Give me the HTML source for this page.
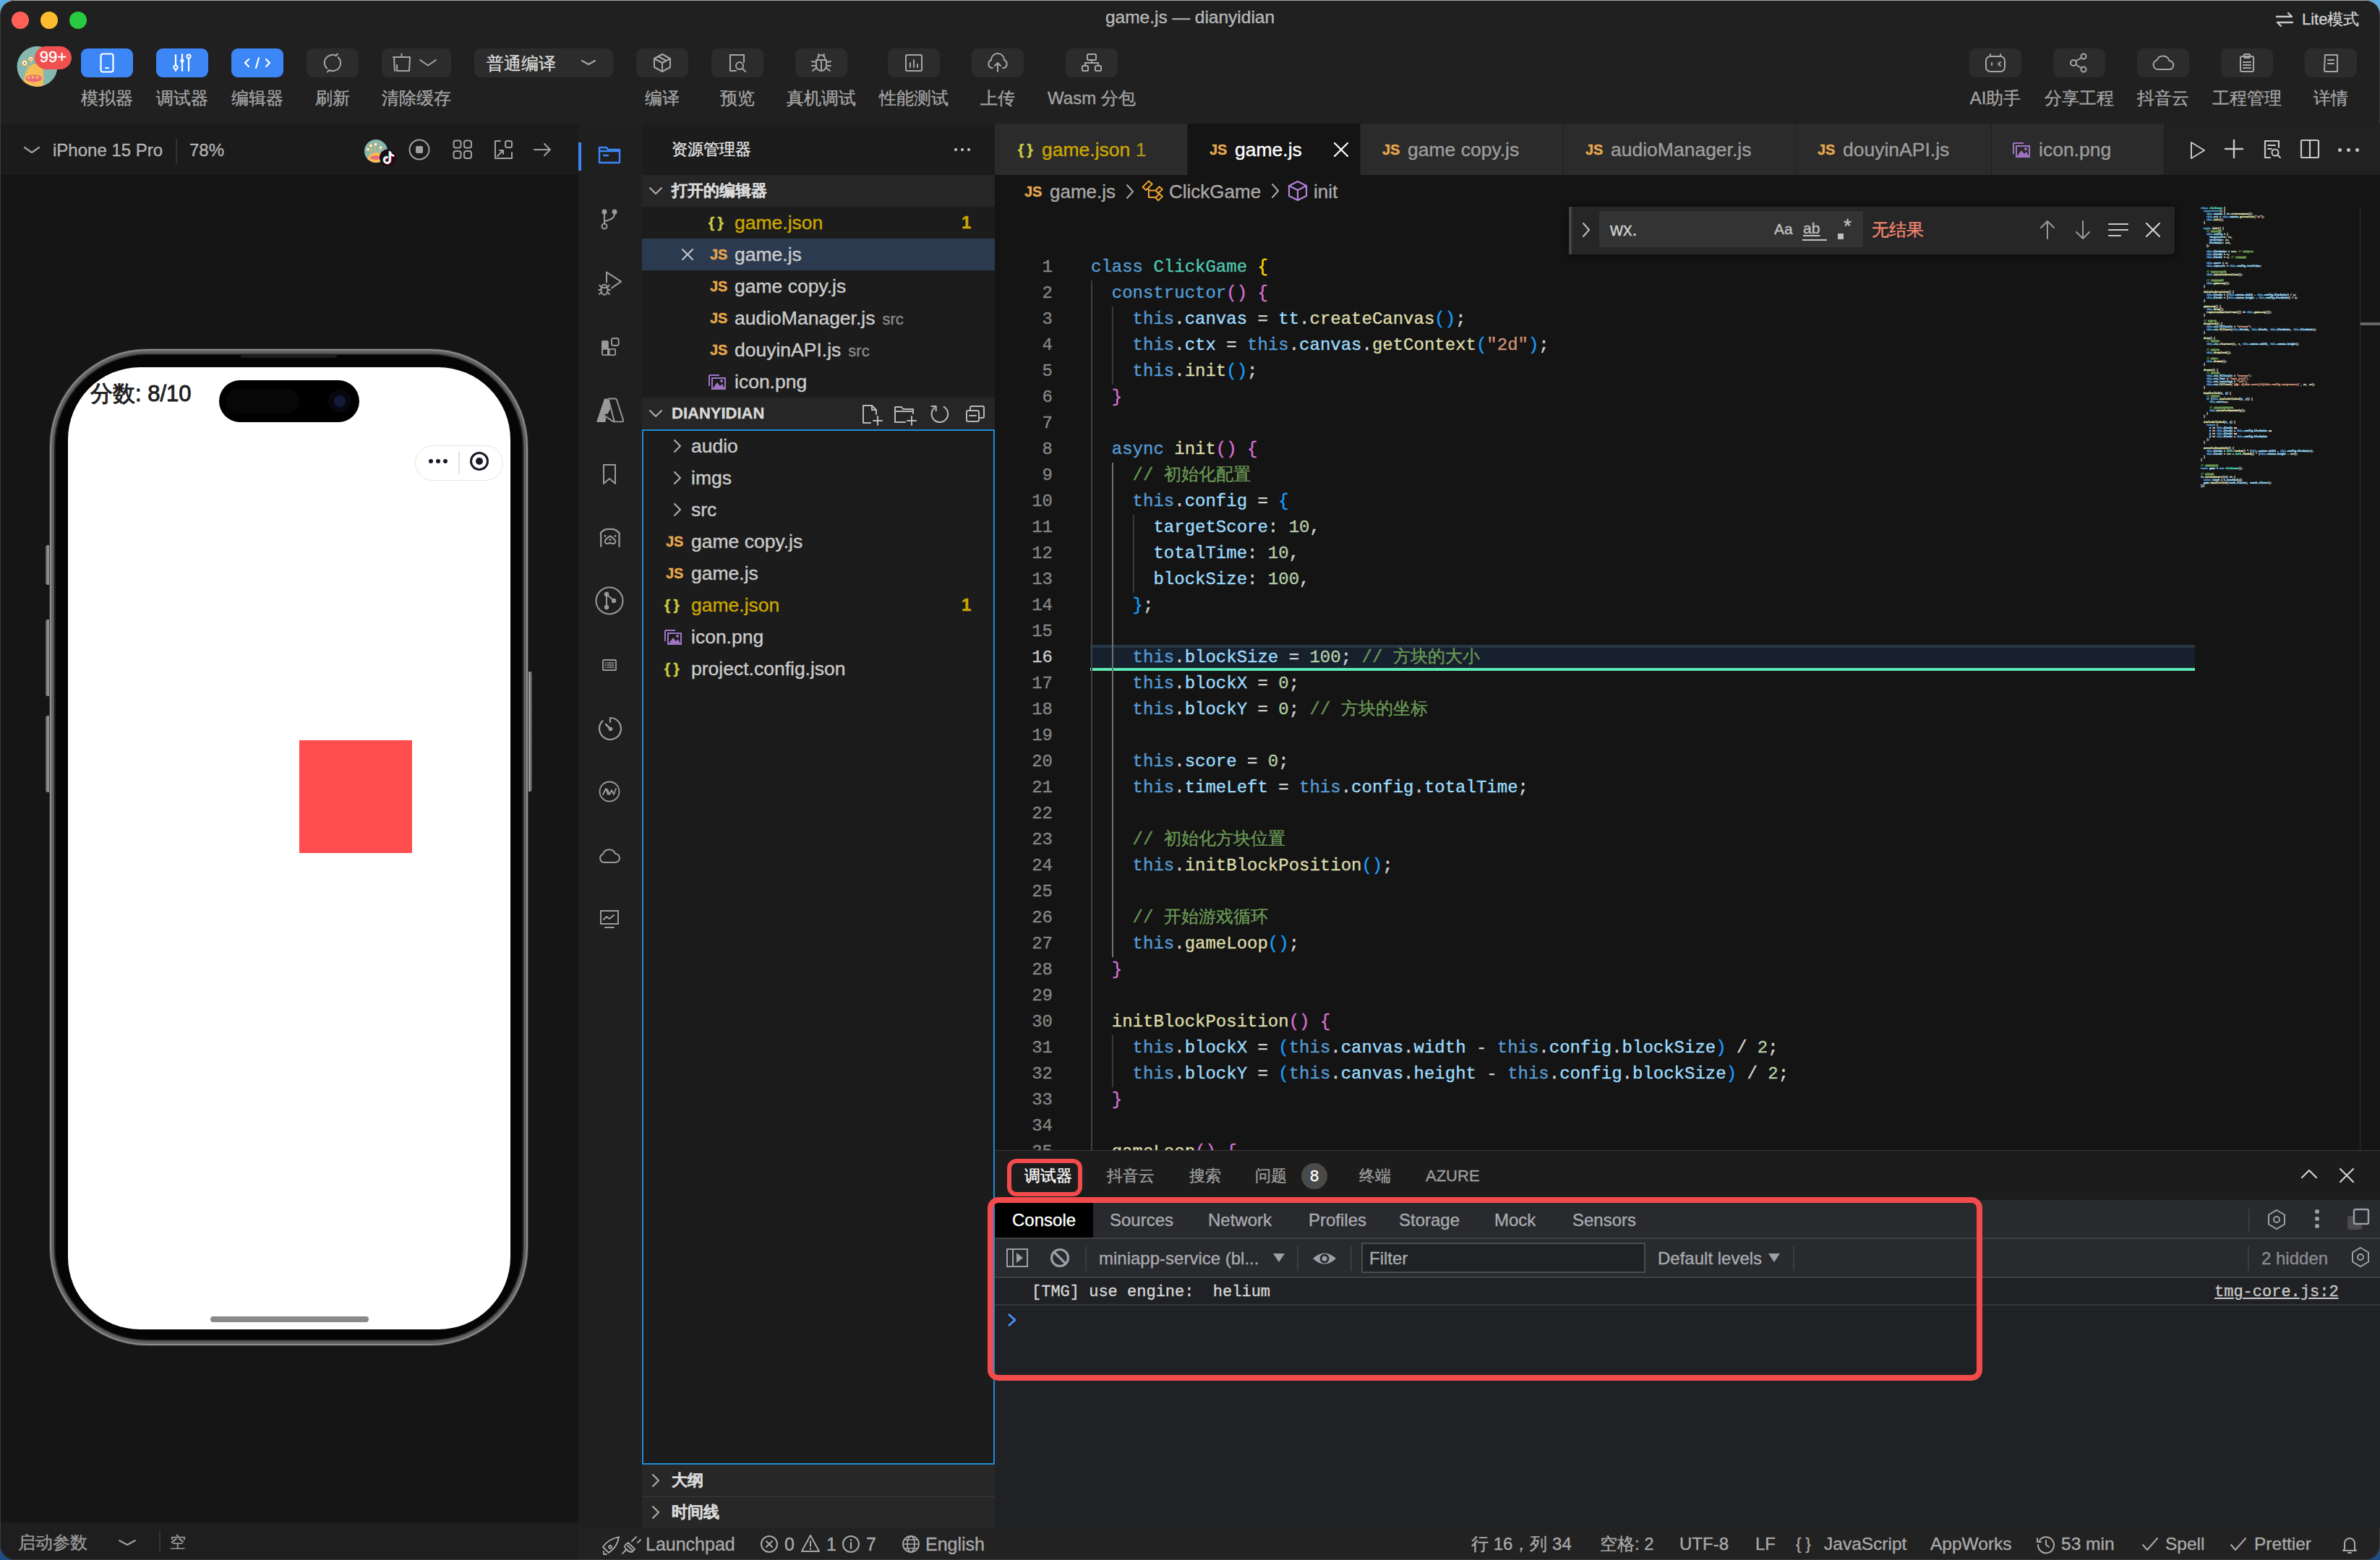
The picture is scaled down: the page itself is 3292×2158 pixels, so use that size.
<!DOCTYPE html><html><head><meta charset="utf-8"><style>
html,body{margin:0;padding:0;}
body{width:3292px;height:2158px;overflow:hidden;background:linear-gradient(180deg,#5ab0e2,#2a6aa8 60%,#1e4c86);position:relative;font-family:"Liberation Sans",sans-serif;}
.a{position:absolute;white-space:nowrap;}
body{-webkit-text-stroke-width:0.35px;}
</style></head><body>

<div class="a" style="left:0px;top:0px;width:3292px;height:2158px;background:#3c3c3c;border-radius:20px;"></div>
<div class="a" style="left:0;top:0;width:3292px;height:40px;border-radius:20px 20px 0 0;border-top:1px solid #a8a8a8;box-sizing:border-box"></div>
<div class="a" style="left:1px;top:1px;width:3290px;height:2156px;background:#202020;border-radius:19px;"></div>
<div class="a" style="left:16px;top:16px;width:24px;height:24px;background:#ff5f57;border-radius:50%;"></div>
<div class="a" style="left:56px;top:16px;width:24px;height:24px;background:#febc2e;border-radius:50%;"></div>
<div class="a" style="left:96px;top:16px;width:24px;height:24px;background:#28c840;border-radius:50%;"></div>
<div class="a" style="left:1346.0px;width:600px;text-align:center;top:6.9px;height:34.3px;line-height:34.3px;font-size:24.5px;color:#b9b9b9;font-weight:normal;font-family:'Liberation Sans', sans-serif;">game.js — dianyidian</div>
<svg class="a" style="left:3146px;top:15px;" width="28" height="24" viewBox="0 0 28 24"><path d="M3 8 H24 M19 3 L24 8 M25 16 H4 M9 21 L4 16" stroke="#c8c8c8" stroke-width="2.4" fill="none" stroke-linecap="round" stroke-linejoin="round"/></svg>
<div class="a" style="left:3184px;top:11.6px;height:30.8px;line-height:30.8px;font-size:22px;color:#cfcfcf;font-weight:normal;font-family:'Liberation Sans', sans-serif;">Lite模式</div>
<svg class="a" style="left:20px;top:60px;" width="84" height="64" viewBox="0 0 84 64">
<defs><clipPath id="avc"><circle cx="31.5" cy="32" r="28"/></clipPath></defs>
<circle cx="31.5" cy="32" r="28" fill="#86b8b2"/><g clip-path="url(#avc)">
<path d="M12 54 Q15 38 21 32 Q27 27.5 33 28.5 Q40 31 40 40 V64 H10 Z" fill="#f6bd55"/>
<path d="M15 30 L21 33 M23 25 L25 30" stroke="#f2b85a" stroke-width="1.5"/>
<ellipse cx="26.7" cy="48.4" rx="11.5" ry="5" fill="#ee6b7a"/>
<path d="M17 46.5 L19.5 50 L22 46 Z M23 45.5 L25.5 49.5 L28 45.5 Z M29 45.5 L31.5 49.5 L34 46 Z" fill="#f6c85a"/>
<circle cx="14" cy="27" r="4" fill="#f5b53f"/><circle cx="14" cy="27" r="2.8" fill="#fff"/><circle cx="14" cy="27.3" r="1" fill="#444"/>
<circle cx="22.5" cy="21.6" r="3.4" fill="#f5b53f"/><circle cx="22.5" cy="21.6" r="2.3" fill="#fff"/><circle cx="22.5" cy="21.8" r="0.9" fill="#444"/></g>
</svg>
<div class="a" style="left:48px;top:64px;width:51px;height:32px;background:#f0504f;border-radius:16px;"></div>
<div class="a" style="left:43.5px;width:60px;text-align:center;top:64.1px;height:30.8px;line-height:30.8px;font-size:22px;color:#fff;font-weight:500;font-family:'Liberation Sans', sans-serif;">99+</div>
<div class="a" style="left:112px;top:67px;width:72px;height:40px;background:#3d86f6;border-radius:9px;"></div>
<div class="a" style="left:216px;top:67px;width:72px;height:40px;background:#3d86f6;border-radius:9px;"></div>
<div class="a" style="left:320px;top:67px;width:72px;height:40px;background:#3d86f6;border-radius:9px;"></div>
<div class="a" style="left:424px;top:67px;width:72px;height:40px;background:#2c2c2c;border-radius:9px;"></div>
<div class="a" style="left:880px;top:67px;width:72px;height:40px;background:#2c2c2c;border-radius:9px;"></div>
<div class="a" style="left:984px;top:67px;width:72px;height:40px;background:#2c2c2c;border-radius:9px;"></div>
<div class="a" style="left:1100px;top:67px;width:72px;height:40px;background:#2c2c2c;border-radius:9px;"></div>
<div class="a" style="left:1228px;top:67px;width:72px;height:40px;background:#2c2c2c;border-radius:9px;"></div>
<div class="a" style="left:1344px;top:67px;width:72px;height:40px;background:#2c2c2c;border-radius:9px;"></div>
<div class="a" style="left:1474px;top:67px;width:72px;height:40px;background:#2c2c2c;border-radius:9px;"></div>
<div class="a" style="left:2724px;top:67px;width:72px;height:40px;background:#2c2c2c;border-radius:9px;"></div>
<div class="a" style="left:2840px;top:67px;width:72px;height:40px;background:#2c2c2c;border-radius:9px;"></div>
<div class="a" style="left:2956px;top:67px;width:72px;height:40px;background:#2c2c2c;border-radius:9px;"></div>
<div class="a" style="left:3072px;top:67px;width:72px;height:40px;background:#2c2c2c;border-radius:9px;"></div>
<div class="a" style="left:3188px;top:67px;width:72px;height:40px;background:#2c2c2c;border-radius:9px;"></div>
<div class="a" style="left:528px;top:67px;width:96px;height:40px;background:#2c2c2c;border-radius:9px;"></div>
<div class="a" style="left:656px;top:67px;width:192px;height:40px;background:#2c2c2c;border-radius:9px;"></div>
<svg class="a" style="left:136px;top:72px;" width="24" height="30" viewBox="0 0 24 30"><rect x="3.5" y="2.5" width="17" height="25" rx="3" stroke="#ffffff" stroke-width="2.2" fill="none" stroke-linecap="round" stroke-linejoin="round"/><path d="M10 22 H14" stroke="#ffffff" stroke-width="2" fill="none" stroke-linecap="round" stroke-linejoin="round"/></svg>
<svg class="a" style="left:236px;top:72px;" width="32" height="30" viewBox="0 0 32 30"><path d="M7 4 V26 M16 3 V26 M25 4 V26" stroke="#ffffff" stroke-width="2.2" fill="none" stroke-linecap="round" stroke-linejoin="round"/><circle cx="7" cy="21" r="2.6" fill="#3d86f6" stroke="#ffffff" stroke-width="2"/><circle cx="16" cy="12" r="2.6" fill="#ffffff"/><circle cx="25" cy="6" r="2.6" fill="#3d86f6" stroke="#ffffff" stroke-width="2"/></svg>
<svg class="a" style="left:336px;top:72px;" width="40" height="30" viewBox="0 0 40 30"><path d="M8 10 L3 15 L8 20 M32 10 L37 15 L32 20 M22 8 L18 22" stroke="#ffffff" stroke-width="2.2" fill="none" stroke-linecap="round" stroke-linejoin="round"/></svg>
<svg class="a" style="left:444px;top:71px;" width="32" height="32" viewBox="0 0 32 32"><path d="M23.8 8.2 A11 11 0 0 1 11.3 26" stroke="#a6a6a6" stroke-width="2" fill="none" stroke-linecap="round" stroke-linejoin="round"/><path d="M8.2 23.8 A11 11 0 0 1 20.7 6" stroke="#a6a6a6" stroke-width="2" fill="none" stroke-linecap="round" stroke-linejoin="round"/><path d="M20.7 6 L23 3.5 M11.3 26 L9 28.5" stroke="#a6a6a6" stroke-width="2" fill="none" stroke-linecap="round" stroke-linejoin="round"/></svg>
<svg class="a" style="left:540px;top:72px;" width="76" height="30" viewBox="0 0 76 30"><path d="M4 7 H27 M15.5 2.5 V7 M5 7 L6 26 M27 7 L26 26 M9 26 H26 M9 18 V26" stroke="#a6a6a6" stroke-width="2" fill="none" stroke-linecap="round" stroke-linejoin="round"/><path d="M41 11 L52 18.5 L63 11" stroke="#a6a6a6" stroke-width="2" fill="none" stroke-linecap="round" stroke-linejoin="round"/></svg>
<div class="a" style="left:673px;top:71.2px;height:33.6px;line-height:33.6px;font-size:24px;color:#d8d8d8;font-weight:500;font-family:'Liberation Sans', sans-serif;">普通编译</div>
<svg class="a" style="left:800px;top:72px;" width="36" height="30" viewBox="0 0 36 30"><path d="M5 12 L14 17 L23 12" stroke="#a6a6a6" stroke-width="2.2" fill="none" stroke-linecap="round" stroke-linejoin="round"/></svg>
<svg class="a" style="left:900px;top:72px;" width="32" height="30" viewBox="0 0 32 30"><path d="M16 3 L27 9 V21 L16 27 L5 21 V9 Z M5 9 L16 15 L27 9 M16 15 V27 M10.5 6 L21.5 12" stroke="#a6a6a6" stroke-width="2" fill="none" stroke-linecap="round" stroke-linejoin="round"/></svg>
<svg class="a" style="left:1004px;top:72px;" width="32" height="30" viewBox="0 0 32 30"><path d="M19 4 H6 V26 H14" stroke="#a6a6a6" stroke-width="2" fill="none" stroke-linecap="round" stroke-linejoin="round"/><path d="M6 4 H25 V14" stroke="#a6a6a6" stroke-width="2" fill="none" stroke-linecap="round" stroke-linejoin="round"/><circle cx="19" cy="19" r="5" stroke="#a6a6a6" stroke-width="2" fill="none" stroke-linecap="round" stroke-linejoin="round"/><path d="M23 23 L27 27" stroke="#a6a6a6" stroke-width="2" fill="none" stroke-linecap="round" stroke-linejoin="round"/></svg>
<svg class="a" style="left:1120px;top:72px;" width="32" height="30" viewBox="0 0 32 30"><path d="M11 9 A5 5 0 0 1 21 9" stroke="#a6a6a6" stroke-width="2" fill="none" stroke-linecap="round" stroke-linejoin="round"/><path d="M9 11 H23 V19 A7 7 0 0 1 9 19 Z M16 13 V26 M12 3 L13 6 M20 3 L19 6 M3 13 L9 14 M29 13 L23 14 M3 19 H9 M29 19 H23 M4 26 L9 22 M28 26 L23 22" stroke="#a6a6a6" stroke-width="2" fill="none" stroke-linecap="round" stroke-linejoin="round"/></svg>
<svg class="a" style="left:1248px;top:72px;" width="32" height="30" viewBox="0 0 32 30"><rect x="5" y="4" width="22" height="22" rx="1.5" stroke="#a6a6a6" stroke-width="2" fill="none" stroke-linecap="round" stroke-linejoin="round"/><path d="M11 21 V15 M16 21 V11 M21 21 V17" stroke="#a6a6a6" stroke-width="2" fill="none" stroke-linecap="round" stroke-linejoin="round"/></svg>
<svg class="a" style="left:1364px;top:72px;" width="32" height="30" viewBox="0 0 32 30"><path d="M9 22 H7 A6 6 0 0 1 7 11 A9 9 0 0 1 25 11 A6 6 0 0 1 25 22 H23" stroke="#a6a6a6" stroke-width="2" fill="none" stroke-linecap="round" stroke-linejoin="round"/><path d="M16 27 V15 M12 19 L16 15 L20 19" stroke="#a6a6a6" stroke-width="2" fill="none" stroke-linecap="round" stroke-linejoin="round"/></svg>
<svg class="a" style="left:1494px;top:72px;" width="32" height="30" viewBox="0 0 32 30"><rect x="10" y="3" width="12" height="8" rx="1.5" stroke="#a6a6a6" stroke-width="2" fill="none" stroke-linecap="round" stroke-linejoin="round"/><rect x="3" y="19" width="8" height="7" rx="1.5" stroke="#a6a6a6" stroke-width="2" fill="none" stroke-linecap="round" stroke-linejoin="round"/><rect x="21" y="19" width="8" height="7" rx="1.5" stroke="#a6a6a6" stroke-width="2" fill="none" stroke-linecap="round" stroke-linejoin="round"/><path d="M16 11 V15 M7 19 V15 H25 V19" stroke="#a6a6a6" stroke-width="2" fill="none" stroke-linecap="round" stroke-linejoin="round"/></svg>
<svg class="a" style="left:2744px;top:72px;" width="32" height="30" viewBox="0 0 32 30"><rect x="3" y="6" width="26" height="21" rx="6" stroke="#a6a6a6" stroke-width="2" fill="none" stroke-linecap="round" stroke-linejoin="round"/><path d="M9 6 V3 M23 6 V3 M11 15 V18 M23 14 L20 16.5 L23 19" stroke="#a6a6a6" stroke-width="2" fill="none" stroke-linecap="round" stroke-linejoin="round"/></svg>
<svg class="a" style="left:2860px;top:72px;" width="32" height="30" viewBox="0 0 32 30"><circle cx="8" cy="15" r="4" stroke="#a6a6a6" stroke-width="2" fill="none" stroke-linecap="round" stroke-linejoin="round"/><circle cx="22" cy="6" r="3.5" stroke="#a6a6a6" stroke-width="2" fill="none" stroke-linecap="round" stroke-linejoin="round"/><circle cx="22" cy="24" r="3.5" stroke="#a6a6a6" stroke-width="2" fill="none" stroke-linecap="round" stroke-linejoin="round"/><path d="M11 12.5 L19 8 M11 17.5 L19 22" stroke="#a6a6a6" stroke-width="2" fill="none" stroke-linecap="round" stroke-linejoin="round"/></svg>
<svg class="a" style="left:2976px;top:72px;" width="32" height="30" viewBox="0 0 32 30"><path d="M9 24 A6.5 6.5 0 0 1 7.5 11.2 A9 9 0 0 1 24.5 12 A6 6 0 0 1 24 24 Z" stroke="#a6a6a6" stroke-width="2" fill="none" stroke-linecap="round" stroke-linejoin="round"/></svg>
<svg class="a" style="left:3092px;top:72px;" width="32" height="30" viewBox="0 0 32 30"><rect x="7" y="6" width="18" height="21" rx="2" stroke="#a6a6a6" stroke-width="2" fill="none" stroke-linecap="round" stroke-linejoin="round"/><rect x="12" y="3" width="8" height="5" rx="1" stroke="#a6a6a6" stroke-width="2" fill="none" stroke-linecap="round" stroke-linejoin="round"/><path d="M11 14 H21 M11 18 H21 M11 22 H21" stroke="#a6a6a6" stroke-width="2" fill="none" stroke-linecap="round" stroke-linejoin="round"/></svg>
<svg class="a" style="left:3208px;top:72px;" width="32" height="30" viewBox="0 0 32 30"><path d="M8 4 H25 V27 H9 Q7 27 7 25 Z" stroke="#a6a6a6" stroke-width="2" fill="none" stroke-linecap="round" stroke-linejoin="round"/><path d="M12 11 H20 M12 16 H20" stroke="#a6a6a6" stroke-width="2" fill="none" stroke-linecap="round" stroke-linejoin="round"/></svg>
<div class="a" style="left:48.0px;width:200px;text-align:center;top:119.2px;height:33.6px;line-height:33.6px;font-size:24px;color:#a3a3a3;font-weight:500;font-family:'Liberation Sans', sans-serif;">模拟器</div>
<div class="a" style="left:152.0px;width:200px;text-align:center;top:119.2px;height:33.6px;line-height:33.6px;font-size:24px;color:#a3a3a3;font-weight:500;font-family:'Liberation Sans', sans-serif;">调试器</div>
<div class="a" style="left:256.0px;width:200px;text-align:center;top:119.2px;height:33.6px;line-height:33.6px;font-size:24px;color:#a3a3a3;font-weight:500;font-family:'Liberation Sans', sans-serif;">编辑器</div>
<div class="a" style="left:360.0px;width:200px;text-align:center;top:119.2px;height:33.6px;line-height:33.6px;font-size:24px;color:#a3a3a3;font-weight:500;font-family:'Liberation Sans', sans-serif;">刷新</div>
<div class="a" style="left:476.0px;width:200px;text-align:center;top:119.2px;height:33.6px;line-height:33.6px;font-size:24px;color:#a3a3a3;font-weight:500;font-family:'Liberation Sans', sans-serif;">清除缓存</div>
<div class="a" style="left:816.0px;width:200px;text-align:center;top:119.2px;height:33.6px;line-height:33.6px;font-size:24px;color:#a3a3a3;font-weight:500;font-family:'Liberation Sans', sans-serif;">编译</div>
<div class="a" style="left:920.0px;width:200px;text-align:center;top:119.2px;height:33.6px;line-height:33.6px;font-size:24px;color:#a3a3a3;font-weight:500;font-family:'Liberation Sans', sans-serif;">预览</div>
<div class="a" style="left:1036.0px;width:200px;text-align:center;top:119.2px;height:33.6px;line-height:33.6px;font-size:24px;color:#a3a3a3;font-weight:500;font-family:'Liberation Sans', sans-serif;">真机调试</div>
<div class="a" style="left:1164.0px;width:200px;text-align:center;top:119.2px;height:33.6px;line-height:33.6px;font-size:24px;color:#a3a3a3;font-weight:500;font-family:'Liberation Sans', sans-serif;">性能测试</div>
<div class="a" style="left:1280.0px;width:200px;text-align:center;top:119.2px;height:33.6px;line-height:33.6px;font-size:24px;color:#a3a3a3;font-weight:500;font-family:'Liberation Sans', sans-serif;">上传</div>
<div class="a" style="left:1410.0px;width:200px;text-align:center;top:119.2px;height:33.6px;line-height:33.6px;font-size:24px;color:#a3a3a3;font-weight:500;font-family:'Liberation Sans', sans-serif;">Wasm 分包</div>
<div class="a" style="left:2660.0px;width:200px;text-align:center;top:119.2px;height:33.6px;line-height:33.6px;font-size:24px;color:#a3a3a3;font-weight:500;font-family:'Liberation Sans', sans-serif;">AI助手</div>
<div class="a" style="left:2776.0px;width:200px;text-align:center;top:119.2px;height:33.6px;line-height:33.6px;font-size:24px;color:#a3a3a3;font-weight:500;font-family:'Liberation Sans', sans-serif;">分享工程</div>
<div class="a" style="left:2892.0px;width:200px;text-align:center;top:119.2px;height:33.6px;line-height:33.6px;font-size:24px;color:#a3a3a3;font-weight:500;font-family:'Liberation Sans', sans-serif;">抖音云</div>
<div class="a" style="left:3008.0px;width:200px;text-align:center;top:119.2px;height:33.6px;line-height:33.6px;font-size:24px;color:#a3a3a3;font-weight:500;font-family:'Liberation Sans', sans-serif;">工程管理</div>
<div class="a" style="left:3124.0px;width:200px;text-align:center;top:119.2px;height:33.6px;line-height:33.6px;font-size:24px;color:#a3a3a3;font-weight:500;font-family:'Liberation Sans', sans-serif;">详情</div>
<div class="a" style="left:1px;top:171px;width:799px;height:71px;background:#1b1b1b;"></div>
<div class="a" style="left:1px;top:242px;width:799px;height:1864px;background:#151515;"></div>
<div class="a" style="left:1px;top:2106px;width:799px;height:51px;background:#1e1e1e;border-radius:0 0 0 19px;"></div>
<svg class="a" style="left:30px;top:196px;" width="30" height="24" viewBox="0 0 30 24"><path d="M4 8 L14 15 L24 8" stroke="#a0a0a0" stroke-width="2.2" fill="none" stroke-linecap="round" stroke-linejoin="round"/></svg>
<div class="a" style="left:73px;top:191.2px;height:33.6px;line-height:33.6px;font-size:24px;color:#b3b3b3;font-weight:normal;font-family:'Liberation Sans', sans-serif;">iPhone 15 Pro</div>
<div class="a" style="left:243px;top:192px;width:2px;height:34px;background:#333;"></div>
<div class="a" style="left:262px;top:191.2px;height:33.6px;line-height:33.6px;font-size:24px;color:#b3b3b3;font-weight:normal;font-family:'Liberation Sans', sans-serif;">78%</div>
<svg class="a" style="left:500px;top:190px;" width="52" height="44" viewBox="0 0 52 44"><defs><clipPath id="av2"><circle cx="20" cy="19" r="16"/></clipPath></defs>
<circle cx="20" cy="19" r="16" fill="#86b8b2"/><g clip-path="url(#av2)">
<path d="M7 36 Q8 21.5 20 20.5 Q31 21.5 32 36 Z" fill="#f6bd55"/>
<path d="M9 17 L12 21 M13 12 L15 20 M19 10.5 L19 20 M26 15 L24 21" stroke="#f2b85a" stroke-width="1.2"/>
<ellipse cx="19.5" cy="28" rx="7.5" ry="3" fill="#ee6b7a"/>
<circle cx="9" cy="16.5" r="2.3" fill="#f5b53f"/><circle cx="9" cy="16.5" r="1.5" fill="#fff"/>
<circle cx="13" cy="11.5" r="2.3" fill="#f5b53f"/><circle cx="13" cy="11.5" r="1.5" fill="#fff"/>
<circle cx="19.5" cy="9.5" r="2.3" fill="#f5b53f"/><circle cx="19.5" cy="9.5" r="1.5" fill="#fff"/>
<circle cx="26.5" cy="14" r="2.3" fill="#f5b53f"/><circle cx="26.5" cy="14" r="1.5" fill="#fff"/></g>
<circle cx="36.5" cy="28" r="11.5" fill="#1c0b16"/>
<path d="M39.5 20.5 Q40.5 24.5 44 25.2 M39.5 20.5 V31.5 A4 4 0 1 1 35.5 27.5" stroke="#25f4ee" stroke-width="2.6" fill="none" stroke-linecap="round" transform="translate(-0.8,-0.6)"/>
<path d="M39.5 20.5 Q40.5 24.5 44 25.2 M39.5 20.5 V31.5 A4 4 0 1 1 35.5 27.5" stroke="#fe2c55" stroke-width="2.6" fill="none" stroke-linecap="round" transform="translate(0.8,0.6)"/>
<path d="M39.5 20.5 Q40.5 24.5 44 25.2 M39.5 20.5 V31.5 A4 4 0 1 1 35.5 27.5" stroke="#fff" stroke-width="2.4" fill="none" stroke-linecap="round"/></svg>
<svg class="a" style="left:564px;top:191px;" width="32" height="32" viewBox="0 0 32 32"><circle cx="16" cy="16" r="13.5" stroke="#a0a0a0" stroke-width="2" fill="none"/><rect x="11" y="11" width="10" height="10" rx="2" fill="#a0a0a0"/></svg>
<svg class="a" style="left:624px;top:191px;" width="32" height="32" viewBox="0 0 32 32"><rect x="3.5" y="3.5" width="10" height="10" rx="3" stroke="#a0a0a0" stroke-width="2" fill="none"/><rect x="18" y="3.5" width="10" height="10" rx="3" stroke="#a0a0a0" stroke-width="2" fill="none"/><rect x="3.5" y="18" width="10" height="10" rx="3" stroke="#a0a0a0" stroke-width="2" fill="none"/><rect x="18" y="18" width="10" height="10" rx="3" stroke="#a0a0a0" stroke-width="2" fill="none"/></svg>
<svg class="a" style="left:680px;top:191px;" width="32" height="32" viewBox="0 0 32 32"><path d="M12 4 H5 V28 H28 V20" stroke="#a0a0a0" stroke-width="2" fill="none" stroke-linecap="round" stroke-linejoin="round"/><rect x="19" y="4" width="9" height="9" rx="2.5" stroke="#a0a0a0" stroke-width="2" fill="none"/><path d="M8 25 L16 17 M11 17 H16 V22" stroke="#a0a0a0" stroke-width="2" fill="none" stroke-linecap="round" stroke-linejoin="round"/></svg>
<svg class="a" style="left:736px;top:191px;" width="32" height="32" viewBox="0 0 32 32"><path d="M3 16 H25 M17 8 L25 16 L17 24" stroke="#a0a0a0" stroke-width="2" fill="none" stroke-linecap="round" stroke-linejoin="round"/></svg>
<div class="a" style="left:63px;top:754px;width:7px;height:55px;background:linear-gradient(90deg,#555,#9a9a9a 50%,#444);border-radius:3px;"></div>
<div class="a" style="left:63px;top:857px;width:7px;height:106px;background:linear-gradient(90deg,#555,#9a9a9a 50%,#444);border-radius:3px;"></div>
<div class="a" style="left:63px;top:990px;width:7px;height:106px;background:linear-gradient(90deg,#555,#9a9a9a 50%,#444);border-radius:3px;"></div>
<div class="a" style="left:729px;top:929px;width:7px;height:166px;background:linear-gradient(90deg,#555,#9a9a9a 50%,#444);border-radius:3px;"></div>
<div class="a" style="left:68px;top:482px;width:663px;height:1380px;background:#3a3a3a;border-radius:136px;"></div>
<div class="a" style="left:69px;top:483px;width:661px;height:1378px;background:#8c8c8c;border-radius:135px;"></div>
<div class="a" style="left:71px;top:485px;width:657px;height:1374px;background:#626262;border-radius:133px;"></div>
<div class="a" style="left:74px;top:488px;width:651px;height:1368px;background:#4a4a4a;border-radius:130px;"></div>
<div class="a" style="left:75px;top:490px;width:649px;height:1364px;background:#1c1c1c;border-radius:129px;"></div>
<div class="a" style="left:77px;top:491px;width:645px;height:1362px;background:#050505;border-radius:127px;"></div>
<div class="a" style="left:333px;top:491px;width:133px;height:4px;background:#1c1c1c;border-radius:0 0 3px 3px;"></div>
<div class="a" style="left:94px;top:508px;width:612px;height:1331px;background:#ffffff;border-radius:100px;"></div>
<div class="a" style="left:303px;top:526px;width:194px;height:58px;background:#000;border-radius:29px;"></div>
<div class="a" style="left:313px;top:538px;width:101px;height:33px;background:#070707;border-radius:17px;"></div>
<div class="a" style="left:454px;top:539px;width:32px;height:32px;background:#07070f;border-radius:50%;"></div>
<div class="a" style="left:462px;top:547px;width:16px;height:16px;background:#141a3a;border-radius:50%;"></div>
<div class="a" style="left:125px;top:523.3px;height:43.4px;line-height:43.4px;font-size:31px;color:#1e1e1e;font-weight:500;font-family:'Liberation Sans', sans-serif;-webkit-text-stroke-width:0.9px;">分数: 8/10</div>
<div class="a" style="left:574px;top:616px;width:122px;height:49px;background:rgba(255,255,255,0.9);border-radius:25px;border:1px solid #e6e6e6;box-sizing:border-box;"></div>
<div class="a" style="left:593px;top:635px;width:6px;height:6px;background:#1a1a2a;border-radius:50%;"></div>
<div class="a" style="left:603px;top:635px;width:6px;height:6px;background:#1a1a2a;border-radius:50%;"></div>
<div class="a" style="left:613px;top:635px;width:6px;height:6px;background:#1a1a2a;border-radius:50%;"></div>
<div class="a" style="left:634px;top:625px;width:1.5px;height:30px;background:#e0e0e0;"></div>
<svg class="a" style="left:648px;top:623px;" width="30" height="30" viewBox="0 0 30 30"><circle cx="15" cy="15" r="11.5" stroke="#1a1a2a" stroke-width="3" fill="none"/><circle cx="15" cy="15" r="5" fill="#1a1a2a"/></svg>
<div class="a" style="left:414px;top:1024px;width:156px;height:156px;background:#ff4d50;"></div>
<div class="a" style="left:291px;top:1821px;width:219px;height:8px;background:#8a8a8a;border-radius:4px;"></div>
<div class="a" style="left:25px;top:2117.6px;height:32.9px;line-height:32.9px;font-size:23.5px;color:#9a9a9a;font-weight:500;font-family:'Liberation Sans', sans-serif;">启动参数</div>
<svg class="a" style="left:160px;top:2124px;" width="32" height="22" viewBox="0 0 32 22"><path d="M5 7 L16 13 L27 7" stroke="#a0a0a0" stroke-width="2" fill="none" stroke-linecap="round" stroke-linejoin="round"/></svg>
<div class="a" style="left:220px;top:2117px;width:2px;height:30px;background:#333;"></div>
<div class="a" style="left:235px;top:2118.6px;height:30.8px;line-height:30.8px;font-size:22px;color:#9a9a9a;font-weight:500;font-family:'Liberation Sans', sans-serif;">空</div>
<div class="a" style="left:800px;top:171px;width:88px;height:1943px;background:#1f1f1f;"></div>
<div class="a" style="left:800px;top:197px;width:4px;height:39px;background:#3d86f6;"></div>
<svg class="a" style="left:825px;top:196px;" width="36" height="36" viewBox="0 0 36 36"><path d="M4 8 H14 L16 11 H32 V29 H4 Z" stroke="#3d86f6" stroke-width="2.4" fill="none" stroke-linecap="round" stroke-linejoin="round"/><path d="M4 13 H32 M10 19 H16" stroke="#3d86f6" stroke-width="2.4" fill="none" stroke-linecap="round" stroke-linejoin="round"/></svg>
<svg class="a" style="left:825px;top:285px;" width="36" height="36" viewBox="0 0 36 36"><circle cx="11" cy="8" r="3.5" fill="#9a9a9a"/><circle cx="25" cy="8" r="3.5" fill="#9a9a9a"/><circle cx="11" cy="28" r="3.5" stroke="#9a9a9a" stroke-width="2" fill="none"/><path d="M11 11 V24 M25 11 Q25 18 12 21" stroke="#9a9a9a" stroke-width="2" fill="none" stroke-linecap="round" stroke-linejoin="round"/></svg>
<svg class="a" style="left:823px;top:371px;" width="40" height="40" viewBox="0 0 40 40"><path d="M16 5.6 V19.4 M16 5.6 L36 18.4 L23.2 27.4" stroke="#9a9a9a" stroke-width="2" fill="none" stroke-linecap="round" stroke-linejoin="round"/><ellipse cx="13" cy="29.6" rx="4.6" ry="7.2" stroke="#9a9a9a" stroke-width="2" fill="none"/><path d="M8.6 27 H17.4 M6 23.5 L9 26 M20 23.5 L17 26 M5 30 H8.5 M21 30 H17.5 M6 36 L9 33 M20 36 L17 33" stroke="#9a9a9a" stroke-width="1.9" fill="none" stroke-linecap="round" stroke-linejoin="round"/></svg>
<svg class="a" style="left:825px;top:462px;" width="36" height="36" viewBox="0 0 36 36"><path d="M9 9 H14.8 Q16.8 9 16.8 11 V20 H25 Q27 20 27 22 V28 Q27 30 25 30 H9 Q7 30 7 28 V11 Q7 9 9 9 Z" fill="#9a9a9a"/><path d="M9 21.8 H15 V28.2 H9 Z M18.6 21.8 H25.2 V28.2 H18.6 Z" fill="#1f1f1f"/><rect x="21" y="6" width="9.7" height="10" rx="2.5" stroke="#9a9a9a" stroke-width="1.9" fill="none"/></svg>
<svg class="a" style="left:823px;top:549px;" width="40" height="38" viewBox="0 0 40 38"><path d="M13 2.5 H18.5 L21 17 L17.5 23.5 L11 24.5 L15.5 29.5 L14.3 35 H3.5 Q2 35 2.5 33.5 Z" fill="#9a9a9a"/><path d="M18.5 2.5 H28 Q29.5 2.5 30 4 L39 32 Q39.5 34.4 37 34.4 H25.5 L11.2 24.5 M18.8 3.8 L26.9 34.4" stroke="#9a9a9a" stroke-width="1.9" fill="none" stroke-linejoin="round"/></svg>
<svg class="a" style="left:825px;top:638px;" width="36" height="36" viewBox="0 0 36 36"><path d="M10 5 H26 V31 L18 24 L10 31 Z" stroke="#9a9a9a" stroke-width="2" fill="none" stroke-linecap="round" stroke-linejoin="round"/></svg>
<svg class="a" style="left:825px;top:722px;" width="38" height="40" viewBox="0 0 38 40"><path d="M6.2 34 V18 Q5 15 7 14 Q12 9 18.8 10 Q25.6 9 30 14 Q32.5 15 31.5 18 V34" stroke="#9a9a9a" stroke-width="2.2" fill="none" stroke-linecap="round" stroke-linejoin="round"/><circle cx="12" cy="19.5" r="1.4" fill="#9a9a9a"/><circle cx="26" cy="19.5" r="1.4" fill="#9a9a9a"/><path d="M19 19.5 Q16 21 12.5 25 Q10.5 29 14 30 Q17 30.5 19 28.5 Q21 30.5 24 30 Q27.5 29 25.5 25 Q22 21 19 19.5 Z" stroke="#9a9a9a" stroke-width="2" fill="none" stroke-linecap="round" stroke-linejoin="round"/><ellipse cx="19" cy="24.5" rx="2.3" ry="1.1" fill="#9a9a9a"/></svg>
<svg class="a" style="left:823px;top:811px;" width="40" height="40" viewBox="0 0 40 40"><circle cx="20" cy="20" r="18.5" stroke="#9a9a9a" stroke-width="2" fill="none"/><circle cx="16" cy="11" r="3.2" fill="#9a9a9a"/><circle cx="16" cy="29" r="3.2" fill="#9a9a9a"/><circle cx="26" cy="20" r="3.2" fill="#9a9a9a"/><path d="M16 11 V29 M16 11 L26 20" stroke="#9a9a9a" stroke-width="2" fill="none" stroke-linecap="round" stroke-linejoin="round"/></svg>
<svg class="a" style="left:825px;top:902px;" width="36" height="36" viewBox="0 0 36 36"><rect x="9" y="11" width="18" height="14" rx="1" stroke="#9a9a9a" stroke-width="1.8" fill="none"/><path d="M12 15 H13 M15 15 H24 M12 18 H13 M15 18 H24 M12 21 H13 M15 21 H24" stroke="#9a9a9a" stroke-width="1.5" fill="none" stroke-linecap="round" stroke-linejoin="round"/></svg>
<svg class="a" style="left:826px;top:990px;" width="36" height="36" viewBox="0 0 36 36"><path d="M18 3 A15 15 0 1 1 7.4 7.4" stroke="#9a9a9a" stroke-width="2.2" fill="none" stroke-linecap="round" stroke-linejoin="round"/><path d="M12 12 L18 18" stroke="#9a9a9a" stroke-width="2.6" fill="none" stroke-linecap="round" stroke-linejoin="round"/><circle cx="18.5" cy="18.5" r="2.8" fill="#9a9a9a"/><path d="M18 3 V9" stroke="#9a9a9a" stroke-width="2.2" fill="none" stroke-linecap="round" stroke-linejoin="round"/></svg>
<svg class="a" style="left:825px;top:1077px;" width="36" height="36" viewBox="0 0 36 36"><circle cx="18" cy="18" r="13.5" stroke="#9a9a9a" stroke-width="1.8" fill="none"/><path d="M9 22 L13 14 L16 22 M15 15 L18 22 L21 16 L24 22 L27 14" stroke="#9a9a9a" stroke-width="1.8" fill="none" stroke-linecap="round" stroke-linejoin="round"/></svg>
<svg class="a" style="left:825px;top:1166px;" width="36" height="36" viewBox="0 0 36 36"><path d="M10 27 A6 6 0 0 1 9 15.5 A9 9 0 0 1 26 15 A6 6 0 0 1 26 27 Z" stroke="#9a9a9a" stroke-width="2" fill="none" stroke-linecap="round" stroke-linejoin="round"/></svg>
<svg class="a" style="left:825px;top:1253px;" width="36" height="36" viewBox="0 0 36 36"><rect x="6" y="7" width="24" height="18" stroke="#9a9a9a" stroke-width="2" fill="none"/><path d="M10 19 L14 15 L18 18 L24 13 M12 30 H24" stroke="#9a9a9a" stroke-width="2" fill="none" stroke-linecap="round" stroke-linejoin="round"/></svg>
<div class="a" style="left:888px;top:171px;width:488px;height:1943px;background:#1c1c1c;"></div>
<div class="a" style="left:929px;top:191.6px;height:30.8px;line-height:30.8px;font-size:22px;color:#e6e6e6;font-weight:500;font-family:'Liberation Sans', sans-serif;">资源管理器</div>
<div class="a" style="left:1320px;top:205px;width:4px;height:4px;background:#cfcfcf;border-radius:50%;"></div>
<div class="a" style="left:1329px;top:205px;width:4px;height:4px;background:#cfcfcf;border-radius:50%;"></div>
<div class="a" style="left:1338px;top:205px;width:4px;height:4px;background:#cfcfcf;border-radius:50%;"></div>
<div class="a" style="left:888px;top:242px;width:488px;height:44px;background:#262626;"></div>
<svg class="a" style="left:896px;top:254px;" width="22" height="20" viewBox="0 0 22 20"><path d="M3 6 L11 14 L19 6" stroke="#b0b0b0" stroke-width="2" fill="none" stroke-linecap="round" stroke-linejoin="round"/></svg>
<div class="a" style="left:929px;top:248.6px;height:30.8px;line-height:30.8px;font-size:22px;color:#d8d8d8;font-weight:bold;font-family:'Liberation Sans', sans-serif;">打开的编辑器</div>
<div class="a" style="left:980px;top:294px;height:28px;line-height:28px;font-size:21px;font-weight:bold;color:#cbcb41;font-family:'Liberation Sans', sans-serif;letter-spacing:0px">{&thinsp;}</div>
<div class="a" style="left:1016px;top:290px;height:36px;line-height:36px;font-size:26.5px;color:#cca700;font-family:'Liberation Sans', sans-serif">game.json</div>
<div class="a" style="left:1330px;top:291.2px;height:33.6px;line-height:33.6px;font-size:24px;color:#cca700;font-weight:bold;font-family:'Liberation Sans', sans-serif;">1</div>
<div class="a" style="left:888px;top:330px;width:488px;height:44px;background:#2c3a50;"></div>
<svg class="a" style="left:940px;top:341px;" width="22" height="22" viewBox="0 0 22 22"><path d="M4 4 L18 18 M18 4 L4 18" stroke="#c8c8c8" stroke-width="2" fill="none" stroke-linecap="round" stroke-linejoin="round"/></svg>
<div class="a" style="left:982px;top:340px;height:24px;line-height:24px;font-size:20px;font-weight:bold;color:#e8a84c;font-family:'Liberation Sans', sans-serif;letter-spacing:0px">JS</div>
<div class="a" style="left:1016px;top:334px;height:36px;line-height:36px;font-size:26.5px;color:#cccccc;font-family:'Liberation Sans', sans-serif">game.js</div>
<div class="a" style="left:982px;top:384px;height:24px;line-height:24px;font-size:20px;font-weight:bold;color:#e8a84c;font-family:'Liberation Sans', sans-serif;letter-spacing:0px">JS</div>
<div class="a" style="left:1016px;top:378px;height:36px;line-height:36px;font-size:26.5px;color:#cccccc;font-family:'Liberation Sans', sans-serif">game copy.js</div>
<div class="a" style="left:982px;top:428px;height:24px;line-height:24px;font-size:20px;font-weight:bold;color:#e8a84c;font-family:'Liberation Sans', sans-serif;letter-spacing:0px">JS</div>
<div class="a" style="left:1016px;top:422px;height:36px;line-height:36px;font-size:26.5px;color:#cccccc;font-family:'Liberation Sans', sans-serif">audioManager.js<span style="font-size:22px;color:#8c8c8c;margin-left:10px">src</span></div>
<div class="a" style="left:982px;top:472px;height:24px;line-height:24px;font-size:20px;font-weight:bold;color:#e8a84c;font-family:'Liberation Sans', sans-serif;letter-spacing:0px">JS</div>
<div class="a" style="left:1016px;top:466px;height:36px;line-height:36px;font-size:26.5px;color:#cccccc;font-family:'Liberation Sans', sans-serif">douyinAPI.js<span style="font-size:22px;color:#8c8c8c;margin-left:10px">src</span></div>
<svg class="a" style="left:979px;top:516px;" width="26" height="24" viewBox="0 0 26 24"><path d="M2 3 H16" stroke="#a074c4" stroke-width="2"/><path d="M2 3 V18" stroke="#a074c4" stroke-width="2"/><rect x="6" y="7" width="18" height="15" fill="none" stroke="#a074c4" stroke-width="2"/><path d="M7 21 L13 13 L17 18 L20 15 L23 21 Z" fill="#a074c4"/><circle cx="19" cy="11" r="2" fill="#a074c4"/></svg>
<div class="a" style="left:1016px;top:510px;height:36px;line-height:36px;font-size:26.5px;color:#cccccc;font-family:'Liberation Sans', sans-serif">icon.png</div>
<div class="a" style="left:888px;top:550px;width:488px;height:44px;background:#262626;"></div>
<svg class="a" style="left:896px;top:562px;" width="22" height="20" viewBox="0 0 22 20"><path d="M3 6 L11 14 L19 6" stroke="#b0b0b0" stroke-width="2" fill="none" stroke-linecap="round" stroke-linejoin="round"/></svg>
<div class="a" style="left:929px;top:556.6px;height:30.8px;line-height:30.8px;font-size:22px;color:#d8d8d8;font-weight:bold;font-family:'Liberation Sans', sans-serif;">DIANYIDIAN</div>
<svg class="a" style="left:1188px;top:556px;" width="34" height="34" viewBox="0 0 34 34"><path d="M18 5 H6 V29 H16 M18 5 L24 11 V17 M18 5 V11 H24" stroke="#b8b8b8" stroke-width="2" fill="none" stroke-linecap="round" stroke-linejoin="round"/><path d="M26 20 V32 M20 26 H32" stroke="#b8b8b8" stroke-width="2" fill="none" stroke-linecap="round" stroke-linejoin="round"/></svg>
<svg class="a" style="left:1235px;top:556px;" width="36" height="34" viewBox="0 0 36 34"><path d="M3 7 H12 L14 10 H28 V16 M3 7 V28 H17 M3 13 H28" stroke="#b8b8b8" stroke-width="2" fill="none" stroke-linecap="round" stroke-linejoin="round"/><path d="M26 20 V32 M20 26 H32" stroke="#b8b8b8" stroke-width="2" fill="none" stroke-linecap="round" stroke-linejoin="round"/></svg>
<svg class="a" style="left:1284px;top:556px;" width="32" height="34" viewBox="0 0 32 34"><path d="M21.55 6.9 A11.3 11.3 0 1 1 8.64 8.04" stroke="#b8b8b8" stroke-width="2" fill="none" stroke-linecap="round" stroke-linejoin="round"/><path d="M4.5 6 H10.7 V12.3" stroke="#b8b8b8" stroke-width="2" fill="none" stroke-linecap="round" stroke-linejoin="round"/></svg>
<svg class="a" style="left:1333px;top:556px;" width="32" height="34" viewBox="0 0 32 34"><rect x="4" y="12" width="17" height="15" rx="2" stroke="#b8b8b8" stroke-width="2" fill="none"/><path d="M9 12 V8 Q9 6 11 6 H26 Q28 6 28 8 V20 Q28 22 26 22 H21 M8 19 H17" stroke="#b8b8b8" stroke-width="2" fill="none" stroke-linecap="round" stroke-linejoin="round"/></svg>
<div class="a" style="left:888px;top:594px;width:488px;height:1432px;border:2px solid #1f8ad8;box-sizing:border-box;"></div>
<svg class="a" style="left:927px;top:606px;" width="20" height="22" viewBox="0 0 20 22"><path d="M6 3 L14 11 L6 19" stroke="#b0b0b0" stroke-width="2" fill="none" stroke-linecap="round" stroke-linejoin="round"/></svg>
<div class="a" style="left:956px;top:599px;height:36px;line-height:36px;font-size:26.5px;color:#cccccc;font-family:'Liberation Sans', sans-serif">audio</div>
<svg class="a" style="left:927px;top:650px;" width="20" height="22" viewBox="0 0 20 22"><path d="M6 3 L14 11 L6 19" stroke="#b0b0b0" stroke-width="2" fill="none" stroke-linecap="round" stroke-linejoin="round"/></svg>
<div class="a" style="left:956px;top:643px;height:36px;line-height:36px;font-size:26.5px;color:#cccccc;font-family:'Liberation Sans', sans-serif">imgs</div>
<svg class="a" style="left:927px;top:694px;" width="20" height="22" viewBox="0 0 20 22"><path d="M6 3 L14 11 L6 19" stroke="#b0b0b0" stroke-width="2" fill="none" stroke-linecap="round" stroke-linejoin="round"/></svg>
<div class="a" style="left:956px;top:687px;height:36px;line-height:36px;font-size:26.5px;color:#cccccc;font-family:'Liberation Sans', sans-serif">src</div>
<div class="a" style="left:921px;top:737px;height:24px;line-height:24px;font-size:20px;font-weight:bold;color:#e8a84c;font-family:'Liberation Sans', sans-serif;letter-spacing:0px">JS</div>
<div class="a" style="left:956px;top:731px;height:36px;line-height:36px;font-size:26.5px;color:#cccccc;font-family:'Liberation Sans', sans-serif">game copy.js</div>
<div class="a" style="left:921px;top:781px;height:24px;line-height:24px;font-size:20px;font-weight:bold;color:#e8a84c;font-family:'Liberation Sans', sans-serif;letter-spacing:0px">JS</div>
<div class="a" style="left:956px;top:775px;height:36px;line-height:36px;font-size:26.5px;color:#cccccc;font-family:'Liberation Sans', sans-serif">game.js</div>
<div class="a" style="left:919px;top:823px;height:28px;line-height:28px;font-size:21px;font-weight:bold;color:#cbcb41;font-family:'Liberation Sans', sans-serif;letter-spacing:0px">{&thinsp;}</div>
<div class="a" style="left:956px;top:819px;height:36px;line-height:36px;font-size:26.5px;color:#cca700;font-family:'Liberation Sans', sans-serif">game.json</div>
<div class="a" style="left:1330px;top:820.2px;height:33.6px;line-height:33.6px;font-size:24px;color:#cca700;font-weight:bold;font-family:'Liberation Sans', sans-serif;">1</div>
<svg class="a" style="left:918px;top:869px;" width="26" height="24" viewBox="0 0 26 24"><path d="M2 3 H16" stroke="#a074c4" stroke-width="2"/><path d="M2 3 V18" stroke="#a074c4" stroke-width="2"/><rect x="6" y="7" width="18" height="15" fill="none" stroke="#a074c4" stroke-width="2"/><path d="M7 21 L13 13 L17 18 L20 15 L23 21 Z" fill="#a074c4"/><circle cx="19" cy="11" r="2" fill="#a074c4"/></svg>
<div class="a" style="left:956px;top:863px;height:36px;line-height:36px;font-size:26.5px;color:#cccccc;font-family:'Liberation Sans', sans-serif">icon.png</div>
<div class="a" style="left:919px;top:911px;height:28px;line-height:28px;font-size:21px;font-weight:bold;color:#cbcb41;font-family:'Liberation Sans', sans-serif;letter-spacing:0px">{&thinsp;}</div>
<div class="a" style="left:956px;top:907px;height:36px;line-height:36px;font-size:26.5px;color:#cccccc;font-family:'Liberation Sans', sans-serif">project.config.json</div>
<div class="a" style="left:888px;top:2026px;width:488px;height:44px;background:#272727;"></div>
<div class="a" style="left:888px;top:2070px;width:488px;height:1px;background:#3a3a3a;"></div>
<div class="a" style="left:888px;top:2071px;width:488px;height:43px;background:#272727;"></div>
<svg class="a" style="left:897px;top:2037px;" width="20" height="22" viewBox="0 0 20 22"><path d="M6 3 L14 11 L6 19" stroke="#b0b0b0" stroke-width="2" fill="none" stroke-linecap="round" stroke-linejoin="round"/></svg>
<div class="a" style="left:929px;top:2032.6px;height:30.8px;line-height:30.8px;font-size:22px;color:#d8d8d8;font-weight:bold;font-family:'Liberation Sans', sans-serif;">大纲</div>
<svg class="a" style="left:897px;top:2081px;" width="20" height="22" viewBox="0 0 20 22"><path d="M6 3 L14 11 L6 19" stroke="#b0b0b0" stroke-width="2" fill="none" stroke-linecap="round" stroke-linejoin="round"/></svg>
<div class="a" style="left:929px;top:2076.6px;height:30.8px;line-height:30.8px;font-size:22px;color:#d8d8d8;font-weight:bold;font-family:'Liberation Sans', sans-serif;">时间线</div>
<div class="a" style="left:1376px;top:171px;width:1916px;height:71px;background:#212121;"></div>
<div class="a" style="left:1376px;top:171px;width:267px;height:71px;background:#2b2b2b;"></div>
<div class="a" style="left:1642px;top:171px;width:1px;height:71px;background:#1e1e1e;"></div>
<div class="a" style="left:1408px;top:193px;height:28px;line-height:28px;font-size:21px;font-weight:bold;color:#cbcb41;font-family:'Liberation Sans', sans-serif;letter-spacing:0px">{&thinsp;}</div>
<div class="a" style="left:1441px;top:189px;height:36px;line-height:36px;font-size:26.5px;color:#cca700;font-family:'Liberation Sans', sans-serif">game.json<span style="color:#a8901e"> 1</span></div>
<div class="a" style="left:1643px;top:171px;width:239px;height:71px;background:#141414;"></div>
<div class="a" style="left:1881px;top:171px;width:1px;height:71px;background:#1e1e1e;"></div>
<div class="a" style="left:1673px;top:195px;height:24px;line-height:24px;font-size:20px;font-weight:bold;color:#e8a84c;font-family:'Liberation Sans', sans-serif;letter-spacing:0px">JS</div>
<div class="a" style="left:1708px;top:189px;height:36px;line-height:36px;font-size:26.5px;color:#ffffff;font-family:'Liberation Sans', sans-serif">game.js</div>
<svg class="a" style="left:1843px;top:195px;" width="24" height="24" viewBox="0 0 24 24"><path d="M3 3 L21 21 M21 3 L3 21" stroke="#ffffff" stroke-width="2.2" fill="none" stroke-linecap="round" stroke-linejoin="round"/></svg>
<div class="a" style="left:1882px;top:171px;width:281px;height:71px;background:#2b2b2b;"></div>
<div class="a" style="left:2162px;top:171px;width:1px;height:71px;background:#1e1e1e;"></div>
<div class="a" style="left:1912px;top:195px;height:24px;line-height:24px;font-size:20px;font-weight:bold;color:#e8a84c;font-family:'Liberation Sans', sans-serif;letter-spacing:0px">JS</div>
<div class="a" style="left:1947px;top:189px;height:36px;line-height:36px;font-size:26.5px;color:#9d9d9d;font-family:'Liberation Sans', sans-serif">game copy.js</div>
<div class="a" style="left:2163px;top:171px;width:321px;height:71px;background:#2b2b2b;"></div>
<div class="a" style="left:2483px;top:171px;width:1px;height:71px;background:#1e1e1e;"></div>
<div class="a" style="left:2193px;top:195px;height:24px;line-height:24px;font-size:20px;font-weight:bold;color:#e8a84c;font-family:'Liberation Sans', sans-serif;letter-spacing:0px">JS</div>
<div class="a" style="left:2228px;top:189px;height:36px;line-height:36px;font-size:26.5px;color:#9d9d9d;font-family:'Liberation Sans', sans-serif">audioManager.js</div>
<div class="a" style="left:2484px;top:171px;width:271px;height:71px;background:#2b2b2b;"></div>
<div class="a" style="left:2754px;top:171px;width:1px;height:71px;background:#1e1e1e;"></div>
<div class="a" style="left:2514px;top:195px;height:24px;line-height:24px;font-size:20px;font-weight:bold;color:#e8a84c;font-family:'Liberation Sans', sans-serif;letter-spacing:0px">JS</div>
<div class="a" style="left:2549px;top:189px;height:36px;line-height:36px;font-size:26.5px;color:#9d9d9d;font-family:'Liberation Sans', sans-serif">douyinAPI.js</div>
<div class="a" style="left:2755px;top:171px;width:239px;height:71px;background:#2b2b2b;"></div>
<div class="a" style="left:2993px;top:171px;width:1px;height:71px;background:#1e1e1e;"></div>
<svg class="a" style="left:2783px;top:195px;" width="26" height="24" viewBox="0 0 26 24"><path d="M2 3 H16" stroke="#a074c4" stroke-width="2"/><path d="M2 3 V18" stroke="#a074c4" stroke-width="2"/><rect x="6" y="7" width="18" height="15" fill="none" stroke="#a074c4" stroke-width="2"/><path d="M7 21 L13 13 L17 18 L20 15 L23 21 Z" fill="#a074c4"/><circle cx="19" cy="11" r="2" fill="#a074c4"/></svg>
<div class="a" style="left:2820px;top:189px;height:36px;line-height:36px;font-size:26.5px;color:#9d9d9d;font-family:'Liberation Sans', sans-serif">icon.png</div>
<svg class="a" style="left:3024px;top:193px;" width="30" height="30" viewBox="0 0 30 30"><path d="M7 4 L25 15 L7 26 Z" stroke="#c8c8c8" stroke-width="2" fill="none" stroke-linecap="round" stroke-linejoin="round"/></svg>
<svg class="a" style="left:3075px;top:191px;" width="30" height="30" viewBox="0 0 30 30"><path d="M15 3 V27 M3 15 H27" stroke="#c8c8c8" stroke-width="2.4" fill="none" stroke-linecap="round" stroke-linejoin="round"/></svg>
<svg class="a" style="left:3128px;top:191px;" width="30" height="30" viewBox="0 0 30 30"><path d="M20 4 H5 V27 H12 M5 4 H24 V13" stroke="#c8c8c8" stroke-width="2.2" fill="none" stroke-linecap="round" stroke-linejoin="round"/><path d="M9 10 H19 M9 15 H14" stroke="#c8c8c8" stroke-width="2" fill="none" stroke-linecap="round" stroke-linejoin="round"/><circle cx="19" cy="20" r="4.5" stroke="#c8c8c8" stroke-width="2" fill="none"/><path d="M22 23 L26 27" stroke="#c8c8c8" stroke-width="2" fill="none" stroke-linecap="round" stroke-linejoin="round"/></svg>
<svg class="a" style="left:3180px;top:191px;" width="30" height="30" viewBox="0 0 30 30"><rect x="3" y="3" width="24" height="24" rx="1.5" stroke="#c8c8c8" stroke-width="2.2" fill="none"/><path d="M15 3 V27" stroke="#c8c8c8" stroke-width="2.2"/></svg>
<div class="a" style="left:3234px;top:205px;width:5px;height:5px;background:#c8c8c8;border-radius:50%;"></div>
<div class="a" style="left:3246px;top:205px;width:5px;height:5px;background:#c8c8c8;border-radius:50%;"></div>
<div class="a" style="left:3258px;top:205px;width:5px;height:5px;background:#c8c8c8;border-radius:50%;"></div>
<div class="a" style="left:1376px;top:242px;width:1916px;height:1349px;background:#141414;"></div>
<div class="a" style="left:1417px;top:253px;height:24px;line-height:24px;font-size:20px;font-weight:bold;color:#e8a84c;font-family:'Liberation Sans', sans-serif;letter-spacing:0px">JS</div>
<div class="a" style="left:1452px;top:246.8px;height:36.4px;line-height:36.4px;font-size:26px;color:#a9a9a9;font-weight:normal;font-family:'Liberation Sans', sans-serif;">game.js</div>
<svg class="a" style="left:1553px;top:253px;" width="20" height="24" viewBox="0 0 20 24"><path d="M6 3 L14 12 L6 21" stroke="#a9a9a9" stroke-width="2" fill="none" stroke-linecap="round" stroke-linejoin="round"/></svg>
<svg class="a" style="left:1578px;top:247px;" width="34" height="36" viewBox="0 0 34 36"><path d="M2.5 11.8 L10.9 3.4 L15.6 7.6 L7.2 16 Z M20.4 16.5 L25.6 11.2 L29.8 14.9 L24 20.2 Z M20.4 26.5 L25.6 21 L29.8 24.8 L24 30.4 Z M10.9 13.5 V26 H21.5 M10.9 16.5 H20" stroke="#f0a22e" stroke-width="2" fill="none" stroke-linejoin="round"/></svg>
<div class="a" style="left:1617px;top:246.8px;height:36.4px;line-height:36.4px;font-size:26px;color:#a9a9a9;font-weight:normal;font-family:'Liberation Sans', sans-serif;">ClickGame</div>
<svg class="a" style="left:1754px;top:252px;" width="20" height="24" viewBox="0 0 20 24"><path d="M6 3 L14 12 L6 21" stroke="#a9a9a9" stroke-width="2" fill="none" stroke-linecap="round" stroke-linejoin="round"/></svg>
<svg class="a" style="left:1780px;top:248px;" width="30" height="32" viewBox="0 0 30 32"><path d="M15 3 L27 9 V23 L15 29 L3 23 V9 Z M3 9 L15 15 L27 9 M15 15 V29" stroke="#b180d7" stroke-width="2.2" fill="none" stroke-linejoin="round"/></svg>
<div class="a" style="left:1817px;top:246.8px;height:36.4px;line-height:36.4px;font-size:26px;color:#a9a9a9;font-weight:normal;font-family:'Liberation Sans', sans-serif;">init</div>
<div class="a" style="left:1376px;top:288px;width:1666px;height:1303px;overflow:hidden">
<div class="a" style="left:132px;top:604px;width:1528px;height:4px;background:#283745"></div>
<div class="a" style="left:132px;top:608px;width:1528px;height:28px;background:#17212e"></div>
<div class="a" style="left:132px;top:636px;width:1528px;height:4px;background:#5ee8b3"></div>
<div class="a" style="left:133px;top:100px;width:2px;height:1224px;background:#404040"></div>
<div class="a" style="left:162px;top:136px;width:2px;height:108px;background:#3a3a3a"></div>
<div class="a" style="left:162px;top:352px;width:2px;height:684px;background:#707070"></div>
<div class="a" style="left:191px;top:424px;width:2px;height:108px;background:#3a3a3a"></div>
<div class="a" style="left:162px;top:1144px;width:2px;height:72px;background:#3a3a3a"></div>
<div class="a" style="left:24px;width:56px;text-align:right;top:64px;height:36px;line-height:36px;font-size:24px;font-family:'Liberation Mono', monospace;color:#858585">1</div>
<div class="a" style="left:133px;top:64px;height:36px;line-height:36px;font-size:24px;font-family:'Liberation Mono', monospace;white-space:pre"><span style="color:#569cd6">class</span><span style="color:#d4d4d4"> </span><span style="color:#4ec9b0">ClickGame</span><span style="color:#d4d4d4"> </span><span style="color:#ffd700">{</span></div>
<div class="a" style="left:24px;width:56px;text-align:right;top:100px;height:36px;line-height:36px;font-size:24px;font-family:'Liberation Mono', monospace;color:#858585">2</div>
<div class="a" style="left:133px;top:100px;height:36px;line-height:36px;font-size:24px;font-family:'Liberation Mono', monospace;white-space:pre"><span style="color:#d4d4d4">  </span><span style="color:#569cd6">constructor</span><span style="color:#da70d6">()</span><span style="color:#d4d4d4"> </span><span style="color:#da70d6">{</span></div>
<div class="a" style="left:24px;width:56px;text-align:right;top:136px;height:36px;line-height:36px;font-size:24px;font-family:'Liberation Mono', monospace;color:#858585">3</div>
<div class="a" style="left:133px;top:136px;height:36px;line-height:36px;font-size:24px;font-family:'Liberation Mono', monospace;white-space:pre"><span style="color:#d4d4d4">    </span><span style="color:#569cd6">this</span><span style="color:#d4d4d4">.</span><span style="color:#9cdcfe">canvas</span><span style="color:#d4d4d4"> = </span><span style="color:#9cdcfe">tt</span><span style="color:#d4d4d4">.</span><span style="color:#dcdcaa">createCanvas</span><span style="color:#179fff">()</span><span style="color:#d4d4d4">;</span></div>
<div class="a" style="left:24px;width:56px;text-align:right;top:172px;height:36px;line-height:36px;font-size:24px;font-family:'Liberation Mono', monospace;color:#858585">4</div>
<div class="a" style="left:133px;top:172px;height:36px;line-height:36px;font-size:24px;font-family:'Liberation Mono', monospace;white-space:pre"><span style="color:#d4d4d4">    </span><span style="color:#569cd6">this</span><span style="color:#d4d4d4">.</span><span style="color:#9cdcfe">ctx</span><span style="color:#d4d4d4"> = </span><span style="color:#569cd6">this</span><span style="color:#d4d4d4">.</span><span style="color:#9cdcfe">canvas</span><span style="color:#d4d4d4">.</span><span style="color:#dcdcaa">getContext</span><span style="color:#179fff">(</span><span style="color:#ce9178">&quot;2d&quot;</span><span style="color:#179fff">)</span><span style="color:#d4d4d4">;</span></div>
<div class="a" style="left:24px;width:56px;text-align:right;top:208px;height:36px;line-height:36px;font-size:24px;font-family:'Liberation Mono', monospace;color:#858585">5</div>
<div class="a" style="left:133px;top:208px;height:36px;line-height:36px;font-size:24px;font-family:'Liberation Mono', monospace;white-space:pre"><span style="color:#d4d4d4">    </span><span style="color:#569cd6">this</span><span style="color:#d4d4d4">.</span><span style="color:#dcdcaa">init</span><span style="color:#179fff">()</span><span style="color:#d4d4d4">;</span></div>
<div class="a" style="left:24px;width:56px;text-align:right;top:244px;height:36px;line-height:36px;font-size:24px;font-family:'Liberation Mono', monospace;color:#858585">6</div>
<div class="a" style="left:133px;top:244px;height:36px;line-height:36px;font-size:24px;font-family:'Liberation Mono', monospace;white-space:pre"><span style="color:#d4d4d4">  </span><span style="color:#da70d6">}</span></div>
<div class="a" style="left:24px;width:56px;text-align:right;top:280px;height:36px;line-height:36px;font-size:24px;font-family:'Liberation Mono', monospace;color:#858585">7</div>
<div class="a" style="left:24px;width:56px;text-align:right;top:316px;height:36px;line-height:36px;font-size:24px;font-family:'Liberation Mono', monospace;color:#858585">8</div>
<div class="a" style="left:133px;top:316px;height:36px;line-height:36px;font-size:24px;font-family:'Liberation Mono', monospace;white-space:pre"><span style="color:#d4d4d4">  </span><span style="color:#569cd6">async</span><span style="color:#d4d4d4"> </span><span style="color:#dcdcaa">init</span><span style="color:#da70d6">()</span><span style="color:#d4d4d4"> </span><span style="color:#da70d6">{</span></div>
<div class="a" style="left:24px;width:56px;text-align:right;top:352px;height:36px;line-height:36px;font-size:24px;font-family:'Liberation Mono', monospace;color:#858585">9</div>
<div class="a" style="left:133px;top:352px;height:36px;line-height:36px;font-size:24px;font-family:'Liberation Mono', monospace;white-space:pre"><span style="color:#d4d4d4">    </span><span style="color:#6a9955">// 初始化配置</span></div>
<div class="a" style="left:24px;width:56px;text-align:right;top:388px;height:36px;line-height:36px;font-size:24px;font-family:'Liberation Mono', monospace;color:#858585">10</div>
<div class="a" style="left:133px;top:388px;height:36px;line-height:36px;font-size:24px;font-family:'Liberation Mono', monospace;white-space:pre"><span style="color:#d4d4d4">    </span><span style="color:#569cd6">this</span><span style="color:#d4d4d4">.</span><span style="color:#9cdcfe">config</span><span style="color:#d4d4d4"> = </span><span style="color:#179fff">{</span></div>
<div class="a" style="left:24px;width:56px;text-align:right;top:424px;height:36px;line-height:36px;font-size:24px;font-family:'Liberation Mono', monospace;color:#858585">11</div>
<div class="a" style="left:133px;top:424px;height:36px;line-height:36px;font-size:24px;font-family:'Liberation Mono', monospace;white-space:pre"><span style="color:#d4d4d4">      </span><span style="color:#9cdcfe">targetScore</span><span style="color:#d4d4d4">: </span><span style="color:#b5cea8">10</span><span style="color:#d4d4d4">,</span></div>
<div class="a" style="left:24px;width:56px;text-align:right;top:460px;height:36px;line-height:36px;font-size:24px;font-family:'Liberation Mono', monospace;color:#858585">12</div>
<div class="a" style="left:133px;top:460px;height:36px;line-height:36px;font-size:24px;font-family:'Liberation Mono', monospace;white-space:pre"><span style="color:#d4d4d4">      </span><span style="color:#9cdcfe">totalTime</span><span style="color:#d4d4d4">: </span><span style="color:#b5cea8">10</span><span style="color:#d4d4d4">,</span></div>
<div class="a" style="left:24px;width:56px;text-align:right;top:496px;height:36px;line-height:36px;font-size:24px;font-family:'Liberation Mono', monospace;color:#858585">13</div>
<div class="a" style="left:133px;top:496px;height:36px;line-height:36px;font-size:24px;font-family:'Liberation Mono', monospace;white-space:pre"><span style="color:#d4d4d4">      </span><span style="color:#9cdcfe">blockSize</span><span style="color:#d4d4d4">: </span><span style="color:#b5cea8">100</span><span style="color:#d4d4d4">,</span></div>
<div class="a" style="left:24px;width:56px;text-align:right;top:532px;height:36px;line-height:36px;font-size:24px;font-family:'Liberation Mono', monospace;color:#858585">14</div>
<div class="a" style="left:133px;top:532px;height:36px;line-height:36px;font-size:24px;font-family:'Liberation Mono', monospace;white-space:pre"><span style="color:#d4d4d4">    </span><span style="color:#179fff">}</span><span style="color:#d4d4d4">;</span></div>
<div class="a" style="left:24px;width:56px;text-align:right;top:568px;height:36px;line-height:36px;font-size:24px;font-family:'Liberation Mono', monospace;color:#858585">15</div>
<div class="a" style="left:24px;width:56px;text-align:right;top:604px;height:36px;line-height:36px;font-size:24px;font-family:'Liberation Mono', monospace;color:#c6c6c6">16</div>
<div class="a" style="left:133px;top:604px;height:36px;line-height:36px;font-size:24px;font-family:'Liberation Mono', monospace;white-space:pre"><span style="color:#d4d4d4">    </span><span style="color:#569cd6">this</span><span style="color:#d4d4d4">.</span><span style="color:#9cdcfe">blockSize</span><span style="color:#d4d4d4"> = </span><span style="color:#b5cea8">100</span><span style="color:#d4d4d4">; </span><span style="color:#6a9955">// 方块的大小</span></div>
<div class="a" style="left:24px;width:56px;text-align:right;top:640px;height:36px;line-height:36px;font-size:24px;font-family:'Liberation Mono', monospace;color:#858585">17</div>
<div class="a" style="left:133px;top:640px;height:36px;line-height:36px;font-size:24px;font-family:'Liberation Mono', monospace;white-space:pre"><span style="color:#d4d4d4">    </span><span style="color:#569cd6">this</span><span style="color:#d4d4d4">.</span><span style="color:#9cdcfe">blockX</span><span style="color:#d4d4d4"> = </span><span style="color:#b5cea8">0</span><span style="color:#d4d4d4">;</span></div>
<div class="a" style="left:24px;width:56px;text-align:right;top:676px;height:36px;line-height:36px;font-size:24px;font-family:'Liberation Mono', monospace;color:#858585">18</div>
<div class="a" style="left:133px;top:676px;height:36px;line-height:36px;font-size:24px;font-family:'Liberation Mono', monospace;white-space:pre"><span style="color:#d4d4d4">    </span><span style="color:#569cd6">this</span><span style="color:#d4d4d4">.</span><span style="color:#9cdcfe">blockY</span><span style="color:#d4d4d4"> = </span><span style="color:#b5cea8">0</span><span style="color:#d4d4d4">; </span><span style="color:#6a9955">// 方块的坐标</span></div>
<div class="a" style="left:24px;width:56px;text-align:right;top:712px;height:36px;line-height:36px;font-size:24px;font-family:'Liberation Mono', monospace;color:#858585">19</div>
<div class="a" style="left:24px;width:56px;text-align:right;top:748px;height:36px;line-height:36px;font-size:24px;font-family:'Liberation Mono', monospace;color:#858585">20</div>
<div class="a" style="left:133px;top:748px;height:36px;line-height:36px;font-size:24px;font-family:'Liberation Mono', monospace;white-space:pre"><span style="color:#d4d4d4">    </span><span style="color:#569cd6">this</span><span style="color:#d4d4d4">.</span><span style="color:#9cdcfe">score</span><span style="color:#d4d4d4"> = </span><span style="color:#b5cea8">0</span><span style="color:#d4d4d4">;</span></div>
<div class="a" style="left:24px;width:56px;text-align:right;top:784px;height:36px;line-height:36px;font-size:24px;font-family:'Liberation Mono', monospace;color:#858585">21</div>
<div class="a" style="left:133px;top:784px;height:36px;line-height:36px;font-size:24px;font-family:'Liberation Mono', monospace;white-space:pre"><span style="color:#d4d4d4">    </span><span style="color:#569cd6">this</span><span style="color:#d4d4d4">.</span><span style="color:#9cdcfe">timeLeft</span><span style="color:#d4d4d4"> = </span><span style="color:#569cd6">this</span><span style="color:#d4d4d4">.</span><span style="color:#9cdcfe">config</span><span style="color:#d4d4d4">.</span><span style="color:#9cdcfe">totalTime</span><span style="color:#d4d4d4">;</span></div>
<div class="a" style="left:24px;width:56px;text-align:right;top:820px;height:36px;line-height:36px;font-size:24px;font-family:'Liberation Mono', monospace;color:#858585">22</div>
<div class="a" style="left:24px;width:56px;text-align:right;top:856px;height:36px;line-height:36px;font-size:24px;font-family:'Liberation Mono', monospace;color:#858585">23</div>
<div class="a" style="left:133px;top:856px;height:36px;line-height:36px;font-size:24px;font-family:'Liberation Mono', monospace;white-space:pre"><span style="color:#d4d4d4">    </span><span style="color:#6a9955">// 初始化方块位置</span></div>
<div class="a" style="left:24px;width:56px;text-align:right;top:892px;height:36px;line-height:36px;font-size:24px;font-family:'Liberation Mono', monospace;color:#858585">24</div>
<div class="a" style="left:133px;top:892px;height:36px;line-height:36px;font-size:24px;font-family:'Liberation Mono', monospace;white-space:pre"><span style="color:#d4d4d4">    </span><span style="color:#569cd6">this</span><span style="color:#d4d4d4">.</span><span style="color:#dcdcaa">initBlockPosition</span><span style="color:#179fff">()</span><span style="color:#d4d4d4">;</span></div>
<div class="a" style="left:24px;width:56px;text-align:right;top:928px;height:36px;line-height:36px;font-size:24px;font-family:'Liberation Mono', monospace;color:#858585">25</div>
<div class="a" style="left:24px;width:56px;text-align:right;top:964px;height:36px;line-height:36px;font-size:24px;font-family:'Liberation Mono', monospace;color:#858585">26</div>
<div class="a" style="left:133px;top:964px;height:36px;line-height:36px;font-size:24px;font-family:'Liberation Mono', monospace;white-space:pre"><span style="color:#d4d4d4">    </span><span style="color:#6a9955">// 开始游戏循环</span></div>
<div class="a" style="left:24px;width:56px;text-align:right;top:1000px;height:36px;line-height:36px;font-size:24px;font-family:'Liberation Mono', monospace;color:#858585">27</div>
<div class="a" style="left:133px;top:1000px;height:36px;line-height:36px;font-size:24px;font-family:'Liberation Mono', monospace;white-space:pre"><span style="color:#d4d4d4">    </span><span style="color:#569cd6">this</span><span style="color:#d4d4d4">.</span><span style="color:#dcdcaa">gameLoop</span><span style="color:#179fff">()</span><span style="color:#d4d4d4">;</span></div>
<div class="a" style="left:24px;width:56px;text-align:right;top:1036px;height:36px;line-height:36px;font-size:24px;font-family:'Liberation Mono', monospace;color:#858585">28</div>
<div class="a" style="left:133px;top:1036px;height:36px;line-height:36px;font-size:24px;font-family:'Liberation Mono', monospace;white-space:pre"><span style="color:#d4d4d4">  </span><span style="color:#da70d6">}</span></div>
<div class="a" style="left:24px;width:56px;text-align:right;top:1072px;height:36px;line-height:36px;font-size:24px;font-family:'Liberation Mono', monospace;color:#858585">29</div>
<div class="a" style="left:24px;width:56px;text-align:right;top:1108px;height:36px;line-height:36px;font-size:24px;font-family:'Liberation Mono', monospace;color:#858585">30</div>
<div class="a" style="left:133px;top:1108px;height:36px;line-height:36px;font-size:24px;font-family:'Liberation Mono', monospace;white-space:pre"><span style="color:#d4d4d4">  </span><span style="color:#dcdcaa">initBlockPosition</span><span style="color:#da70d6">()</span><span style="color:#d4d4d4"> </span><span style="color:#da70d6">{</span></div>
<div class="a" style="left:24px;width:56px;text-align:right;top:1144px;height:36px;line-height:36px;font-size:24px;font-family:'Liberation Mono', monospace;color:#858585">31</div>
<div class="a" style="left:133px;top:1144px;height:36px;line-height:36px;font-size:24px;font-family:'Liberation Mono', monospace;white-space:pre"><span style="color:#d4d4d4">    </span><span style="color:#569cd6">this</span><span style="color:#d4d4d4">.</span><span style="color:#9cdcfe">blockX</span><span style="color:#d4d4d4"> = </span><span style="color:#179fff">(</span><span style="color:#569cd6">this</span><span style="color:#d4d4d4">.</span><span style="color:#9cdcfe">canvas</span><span style="color:#d4d4d4">.</span><span style="color:#9cdcfe">width</span><span style="color:#d4d4d4"> - </span><span style="color:#569cd6">this</span><span style="color:#d4d4d4">.</span><span style="color:#9cdcfe">config</span><span style="color:#d4d4d4">.</span><span style="color:#9cdcfe">blockSize</span><span style="color:#179fff">)</span><span style="color:#d4d4d4"> / </span><span style="color:#b5cea8">2</span><span style="color:#d4d4d4">;</span></div>
<div class="a" style="left:24px;width:56px;text-align:right;top:1180px;height:36px;line-height:36px;font-size:24px;font-family:'Liberation Mono', monospace;color:#858585">32</div>
<div class="a" style="left:133px;top:1180px;height:36px;line-height:36px;font-size:24px;font-family:'Liberation Mono', monospace;white-space:pre"><span style="color:#d4d4d4">    </span><span style="color:#569cd6">this</span><span style="color:#d4d4d4">.</span><span style="color:#9cdcfe">blockY</span><span style="color:#d4d4d4"> = </span><span style="color:#179fff">(</span><span style="color:#569cd6">this</span><span style="color:#d4d4d4">.</span><span style="color:#9cdcfe">canvas</span><span style="color:#d4d4d4">.</span><span style="color:#9cdcfe">height</span><span style="color:#d4d4d4"> - </span><span style="color:#569cd6">this</span><span style="color:#d4d4d4">.</span><span style="color:#9cdcfe">config</span><span style="color:#d4d4d4">.</span><span style="color:#9cdcfe">blockSize</span><span style="color:#179fff">)</span><span style="color:#d4d4d4"> / </span><span style="color:#b5cea8">2</span><span style="color:#d4d4d4">;</span></div>
<div class="a" style="left:24px;width:56px;text-align:right;top:1216px;height:36px;line-height:36px;font-size:24px;font-family:'Liberation Mono', monospace;color:#858585">33</div>
<div class="a" style="left:133px;top:1216px;height:36px;line-height:36px;font-size:24px;font-family:'Liberation Mono', monospace;white-space:pre"><span style="color:#d4d4d4">  </span><span style="color:#da70d6">}</span></div>
<div class="a" style="left:24px;width:56px;text-align:right;top:1252px;height:36px;line-height:36px;font-size:24px;font-family:'Liberation Mono', monospace;color:#858585">34</div>
<div class="a" style="left:24px;width:56px;text-align:right;top:1288px;height:36px;line-height:36px;font-size:24px;font-family:'Liberation Mono', monospace;color:#858585">35</div>
<div class="a" style="left:133px;top:1288px;height:36px;line-height:36px;font-size:24px;font-family:'Liberation Mono', monospace;white-space:pre"><span style="color:#d4d4d4">  </span><span style="color:#dcdcaa">gameLoop</span><span style="color:#da70d6">()</span><span style="color:#d4d4d4"> </span><span style="color:#da70d6">{</span></div>
</div>
<div class="a" style="left:2170px;top:286px;width:838px;height:66px;background:#262626;border-radius:0 0 6px 6px;box-shadow:0 2px 8px rgba(0,0,0,0.6)"></div>
<div class="a" style="left:2170px;top:286px;width:4px;height:66px;background:#454545;"></div>
<svg class="a" style="left:2184px;top:305px;" width="20" height="26" viewBox="0 0 20 26"><path d="M6 4 L14 13 L6 22" stroke="#c0c0c0" stroke-width="2" fill="none" stroke-linecap="round" stroke-linejoin="round"/></svg>
<div class="a" style="left:2212px;top:292px;width:365px;height:50px;background:#333333;border-radius:3px;"></div>
<div class="a" style="left:2227px;top:299.5px;height:35.0px;line-height:35.0px;font-size:25px;color:#cccccc;font-weight:normal;font-family:'Liberation Sans', sans-serif;">wx.</div>
<div class="a" style="left:2454px;top:302.3px;height:29.4px;line-height:29.4px;font-size:21px;color:#c0c0c0;font-weight:normal;font-family:'Liberation Sans', sans-serif;">Aa</div>
<div class="a" style="left:2494px;top:303px;height:26px;line-height:26px;font-size:21px;color:#c0c0c0;font-family:'Liberation Sans', sans-serif;text-decoration:underline">ab</div>
<div class="a" style="left:2493px;top:331px;width:34px;height:2px;background:#c0c0c0;"></div>
<div class="a" style="left:2542px;top:323px;width:8px;height:8px;background:#c0c0c0;"></div>
<div class="a" style="left:2550px;top:293.4px;height:39.2px;line-height:39.2px;font-size:28px;color:#c0c0c0;font-weight:normal;font-family:'Liberation Sans', sans-serif;">*</div>
<div class="a" style="left:2589px;top:301.2px;height:33.6px;line-height:33.6px;font-size:24px;color:#f48771;font-weight:normal;font-family:'Liberation Sans', sans-serif;">无结果</div>
<svg class="a" style="left:2818px;top:302px;" width="28" height="32" viewBox="0 0 28 32"><path d="M14 4 V28 M5 13 L14 4 L23 13" stroke="#9a9a9a" stroke-width="2" fill="none" stroke-linecap="round" stroke-linejoin="round"/></svg>
<svg class="a" style="left:2867px;top:302px;" width="28" height="32" viewBox="0 0 28 32"><path d="M14 4 V28 M5 19 L14 28 L23 19" stroke="#9a9a9a" stroke-width="2" fill="none" stroke-linecap="round" stroke-linejoin="round"/></svg>
<svg class="a" style="left:2914px;top:304px;" width="32" height="28" viewBox="0 0 32 28"><path d="M3 6 H29 M3 14 H29 M3 22 H19" stroke="#c8c8c8" stroke-width="2.2" fill="none" stroke-linecap="round" stroke-linejoin="round"/></svg>
<svg class="a" style="left:2964px;top:304px;" width="28" height="28" viewBox="0 0 28 28"><path d="M5 5 L23 23 M23 5 L5 23" stroke="#d0d0d0" stroke-width="2.2" fill="none" stroke-linecap="round" stroke-linejoin="round"/></svg>
<div class="a" style="left:3044px;top:286px;font-family:'Liberation Mono', monospace;font-size:3.34px;line-height:4.0px;white-space:pre;font-weight:bold"><span style="color:#569cd6">class</span> <span style="color:#4ec9b0">ClickGame</span> <span style="color:#d4d4d4">{</span>
  <span style="color:#569cd6">constructor</span><span style="color:#d4d4d4">(</span><span style="color:#d4d4d4">)</span> <span style="color:#d4d4d4">{</span>
    <span style="color:#569cd6">this</span><span style="color:#d4d4d4">.</span><span style="color:#9cdcfe">canvas</span> <span style="color:#d4d4d4">=</span> <span style="color:#9cdcfe">tt</span><span style="color:#d4d4d4">.</span><span style="color:#dcdcaa">createCanvas</span><span style="color:#d4d4d4">(</span><span style="color:#d4d4d4">)</span><span style="color:#d4d4d4">;</span>
    <span style="color:#569cd6">this</span><span style="color:#d4d4d4">.</span><span style="color:#9cdcfe">ctx</span> <span style="color:#d4d4d4">=</span> <span style="color:#569cd6">this</span><span style="color:#d4d4d4">.</span><span style="color:#9cdcfe">canvas</span><span style="color:#d4d4d4">.</span><span style="color:#dcdcaa">getContext</span><span style="color:#d4d4d4">(</span><span style="color:#ce9178">&quot;2d&quot;</span><span style="color:#d4d4d4">)</span><span style="color:#d4d4d4">;</span>
    <span style="color:#569cd6">this</span><span style="color:#d4d4d4">.</span><span style="color:#dcdcaa">init</span><span style="color:#d4d4d4">(</span><span style="color:#d4d4d4">)</span><span style="color:#d4d4d4">;</span>
  <span style="color:#d4d4d4">}</span>

  <span style="color:#569cd6">async</span> <span style="color:#dcdcaa">init</span><span style="color:#d4d4d4">(</span><span style="color:#d4d4d4">)</span> <span style="color:#d4d4d4">{</span>
    <span style="color:#6a9955">// 初始化配置</span>
    <span style="color:#569cd6">this</span><span style="color:#d4d4d4">.</span><span style="color:#9cdcfe">config</span> <span style="color:#d4d4d4">=</span> <span style="color:#d4d4d4">{</span>
      <span style="color:#9cdcfe">targetScore</span><span style="color:#d4d4d4">:</span> <span style="color:#b5cea8">10</span><span style="color:#d4d4d4">,</span>
      <span style="color:#9cdcfe">totalTime</span><span style="color:#d4d4d4">:</span> <span style="color:#b5cea8">10</span><span style="color:#d4d4d4">,</span>
      <span style="color:#9cdcfe">blockSize</span><span style="color:#d4d4d4">:</span> <span style="color:#b5cea8">100</span><span style="color:#d4d4d4">,</span>
    <span style="color:#d4d4d4">}</span><span style="color:#d4d4d4">;</span>

    <span style="color:#569cd6">this</span><span style="color:#d4d4d4">.</span><span style="color:#9cdcfe">blockSize</span> <span style="color:#d4d4d4">=</span> <span style="color:#b5cea8">100</span><span style="color:#d4d4d4">;</span> <span style="color:#6a9955">// 方块的大小</span>
    <span style="color:#569cd6">this</span><span style="color:#d4d4d4">.</span><span style="color:#9cdcfe">blockX</span> <span style="color:#d4d4d4">=</span> <span style="color:#b5cea8">0</span><span style="color:#d4d4d4">;</span>
    <span style="color:#569cd6">this</span><span style="color:#d4d4d4">.</span><span style="color:#9cdcfe">blockY</span> <span style="color:#d4d4d4">=</span> <span style="color:#b5cea8">0</span><span style="color:#d4d4d4">;</span> <span style="color:#6a9955">// 方块的坐标</span>

    <span style="color:#569cd6">this</span><span style="color:#d4d4d4">.</span><span style="color:#9cdcfe">score</span> <span style="color:#d4d4d4">=</span> <span style="color:#b5cea8">0</span><span style="color:#d4d4d4">;</span>
    <span style="color:#569cd6">this</span><span style="color:#d4d4d4">.</span><span style="color:#9cdcfe">timeLeft</span> <span style="color:#d4d4d4">=</span> <span style="color:#569cd6">this</span><span style="color:#d4d4d4">.</span><span style="color:#9cdcfe">config</span><span style="color:#d4d4d4">.</span><span style="color:#9cdcfe">totalTime</span><span style="color:#d4d4d4">;</span>

    <span style="color:#6a9955">// 初始化方块位置</span>
    <span style="color:#569cd6">this</span><span style="color:#d4d4d4">.</span><span style="color:#dcdcaa">initBlockPosition</span><span style="color:#d4d4d4">(</span><span style="color:#d4d4d4">)</span><span style="color:#d4d4d4">;</span>

    <span style="color:#6a9955">// 开始游戏循环</span>
    <span style="color:#569cd6">this</span><span style="color:#d4d4d4">.</span><span style="color:#dcdcaa">gameLoop</span><span style="color:#d4d4d4">(</span><span style="color:#d4d4d4">)</span><span style="color:#d4d4d4">;</span>
  <span style="color:#d4d4d4">}</span>

  <span style="color:#dcdcaa">initBlockPosition</span><span style="color:#d4d4d4">(</span><span style="color:#d4d4d4">)</span> <span style="color:#d4d4d4">{</span>
    <span style="color:#569cd6">this</span><span style="color:#d4d4d4">.</span><span style="color:#9cdcfe">blockX</span> <span style="color:#d4d4d4">=</span> <span style="color:#d4d4d4">(</span><span style="color:#569cd6">this</span><span style="color:#d4d4d4">.</span><span style="color:#9cdcfe">canvas</span><span style="color:#d4d4d4">.</span><span style="color:#9cdcfe">width</span> <span style="color:#d4d4d4">-</span> <span style="color:#569cd6">this</span><span style="color:#d4d4d4">.</span><span style="color:#9cdcfe">config</span><span style="color:#d4d4d4">.</span><span style="color:#9cdcfe">blockSize</span><span style="color:#d4d4d4">)</span> <span style="color:#d4d4d4">/</span> <span style="color:#b5cea8">2</span><span style="color:#d4d4d4">;</span>
    <span style="color:#569cd6">this</span><span style="color:#d4d4d4">.</span><span style="color:#9cdcfe">blockY</span> <span style="color:#d4d4d4">=</span> <span style="color:#d4d4d4">(</span><span style="color:#569cd6">this</span><span style="color:#d4d4d4">.</span><span style="color:#9cdcfe">canvas</span><span style="color:#d4d4d4">.</span><span style="color:#9cdcfe">height</span> <span style="color:#d4d4d4">-</span> <span style="color:#569cd6">this</span><span style="color:#d4d4d4">.</span><span style="color:#9cdcfe">config</span><span style="color:#d4d4d4">.</span><span style="color:#9cdcfe">blockSize</span><span style="color:#d4d4d4">)</span> <span style="color:#d4d4d4">/</span> <span style="color:#b5cea8">2</span><span style="color:#d4d4d4">;</span>
  <span style="color:#d4d4d4">}</span>

  <span style="color:#dcdcaa">gameLoop</span><span style="color:#d4d4d4">(</span><span style="color:#d4d4d4">)</span> <span style="color:#d4d4d4">{</span>
    <span style="color:#569cd6">this</span><span style="color:#d4d4d4">.</span><span style="color:#dcdcaa">draw</span><span style="color:#d4d4d4">(</span><span style="color:#d4d4d4">)</span><span style="color:#d4d4d4">;</span>
    <span style="color:#dcdcaa">requestAnimationFrame</span><span style="color:#d4d4d4">(</span><span style="color:#d4d4d4">(</span><span style="color:#d4d4d4">)</span> <span style="color:#d4d4d4">=</span><span style="color:#d4d4d4">&gt;</span> <span style="color:#569cd6">this</span><span style="color:#d4d4d4">.</span><span style="color:#dcdcaa">gameLoop</span><span style="color:#d4d4d4">(</span><span style="color:#d4d4d4">)</span><span style="color:#d4d4d4">)</span><span style="color:#d4d4d4">;</span>
  <span style="color:#d4d4d4">}</span>

  <span style="color:#6a9955">// 绘制方块</span>
  <span style="color:#dcdcaa">drawBlock</span><span style="color:#d4d4d4">(</span><span style="color:#d4d4d4">)</span> <span style="color:#d4d4d4">{</span>
    <span style="color:#569cd6">this</span><span style="color:#d4d4d4">.</span><span style="color:#9cdcfe">ctx</span><span style="color:#d4d4d4">.</span><span style="color:#9cdcfe">fillStyle</span> <span style="color:#d4d4d4">=</span> <span style="color:#ce9178">&quot;#FF4D4F&quot;</span><span style="color:#d4d4d4">;</span>
    <span style="color:#569cd6">this</span><span style="color:#d4d4d4">.</span><span style="color:#9cdcfe">ctx</span><span style="color:#d4d4d4">.</span><span style="color:#dcdcaa">fillRect</span><span style="color:#d4d4d4">(</span><span style="color:#569cd6">this</span><span style="color:#d4d4d4">.</span><span style="color:#9cdcfe">blockX</span><span style="color:#d4d4d4">,</span> <span style="color:#569cd6">this</span><span style="color:#d4d4d4">.</span><span style="color:#9cdcfe">blockY</span><span style="color:#d4d4d4">,</span> <span style="color:#569cd6">this</span><span style="color:#d4d4d4">.</span><span style="color:#9cdcfe">blockSize</span><span style="color:#d4d4d4">,</span> <span style="color:#569cd6">this</span><span style="color:#d4d4d4">.</span><span style="color:#9cdcfe">blockSize</span><span style="color:#d4d4d4">)</span><span style="color:#d4d4d4">;</span>
  <span style="color:#d4d4d4">}</span>

  <span style="color:#dcdcaa">draw</span><span style="color:#d4d4d4">(</span><span style="color:#d4d4d4">)</span> <span style="color:#d4d4d4">{</span>
    <span style="color:#6a9955">// 清空画布</span>
    <span style="color:#569cd6">this</span><span style="color:#d4d4d4">.</span><span style="color:#9cdcfe">ctx</span><span style="color:#d4d4d4">.</span><span style="color:#dcdcaa">clearRect</span><span style="color:#d4d4d4">(</span><span style="color:#b5cea8">0</span><span style="color:#d4d4d4">,</span> <span style="color:#b5cea8">0</span><span style="color:#d4d4d4">,</span> <span style="color:#569cd6">this</span><span style="color:#d4d4d4">.</span><span style="color:#9cdcfe">canvas</span><span style="color:#d4d4d4">.</span><span style="color:#9cdcfe">width</span><span style="color:#d4d4d4">,</span> <span style="color:#569cd6">this</span><span style="color:#d4d4d4">.</span><span style="color:#9cdcfe">canvas</span><span style="color:#d4d4d4">.</span><span style="color:#9cdcfe">height</span><span style="color:#d4d4d4">)</span><span style="color:#d4d4d4">;</span>

    <span style="color:#6a9955">// 绘制方块</span>
    <span style="color:#569cd6">this</span><span style="color:#d4d4d4">.</span><span style="color:#dcdcaa">drawBlock</span><span style="color:#d4d4d4">(</span><span style="color:#d4d4d4">)</span><span style="color:#d4d4d4">;</span>

    <span style="color:#6a9955">// 绘制UI</span>
    <span style="color:#569cd6">this</span><span style="color:#d4d4d4">.</span><span style="color:#dcdcaa">drawUI</span><span style="color:#d4d4d4">(</span><span style="color:#d4d4d4">)</span><span style="color:#d4d4d4">;</span>
  <span style="color:#d4d4d4">}</span>

  <span style="color:#dcdcaa">drawUI</span><span style="color:#d4d4d4">(</span><span style="color:#d4d4d4">)</span> <span style="color:#d4d4d4">{</span>
    <span style="color:#6a9955">// 绘制分数</span>
    <span style="color:#569cd6">this</span><span style="color:#d4d4d4">.</span><span style="color:#9cdcfe">ctx</span><span style="color:#d4d4d4">.</span><span style="color:#9cdcfe">fillStyle</span> <span style="color:#d4d4d4">=</span> <span style="color:#ce9178">&quot;#000000&quot;</span><span style="color:#d4d4d4">;</span>
    <span style="color:#569cd6">this</span><span style="color:#d4d4d4">.</span><span style="color:#9cdcfe">ctx</span><span style="color:#d4d4d4">.</span><span style="color:#9cdcfe">font</span> <span style="color:#d4d4d4">=</span> <span style="color:#ce9178">&quot;20px Arial&quot;</span><span style="color:#d4d4d4">;</span>
    <span style="color:#569cd6">this</span><span style="color:#d4d4d4">.</span><span style="color:#9cdcfe">ctx</span><span style="color:#d4d4d4">.</span><span style="color:#9cdcfe">textAlign</span> <span style="color:#d4d4d4">=</span> <span style="color:#ce9178">&quot;left&quot;</span><span style="color:#d4d4d4">;</span>
    <span style="color:#569cd6">this</span><span style="color:#d4d4d4">.</span><span style="color:#9cdcfe">ctx</span><span style="color:#d4d4d4">.</span><span style="color:#dcdcaa">fillText</span><span style="color:#d4d4d4">(</span><span style="color:#ce9178">`分数: ${this.score}/${this.config.targetScore}`</span><span style="color:#d4d4d4">,</span> <span style="color:#b5cea8">20</span><span style="color:#d4d4d4">,</span> <span style="color:#b5cea8">30</span><span style="color:#d4d4d4">)</span><span style="color:#d4d4d4">;</span>
  <span style="color:#d4d4d4">}</span>

  <span style="color:#dcdcaa">handleClick</span><span style="color:#d4d4d4">(</span><span style="color:#9cdcfe">x</span><span style="color:#d4d4d4">,</span> <span style="color:#9cdcfe">y</span><span style="color:#d4d4d4">)</span> <span style="color:#d4d4d4">{</span>
    <span style="color:#6a9955">// 检测点击</span>
    <span style="color:#569cd6">if</span> <span style="color:#d4d4d4">(</span><span style="color:#569cd6">this</span><span style="color:#d4d4d4">.</span><span style="color:#dcdcaa">isBlockClicked</span><span style="color:#d4d4d4">(</span><span style="color:#9cdcfe">x</span><span style="color:#d4d4d4">,</span> <span style="color:#9cdcfe">y</span><span style="color:#d4d4d4">)</span><span style="color:#d4d4d4">)</span> <span style="color:#d4d4d4">{</span>
      <span style="color:#569cd6">this</span><span style="color:#d4d4d4">.</span><span style="color:#9cdcfe">score</span><span style="color:#d4d4d4">+</span><span style="color:#d4d4d4">+</span><span style="color:#d4d4d4">;</span>

      <span style="color:#6a9955">// 点击成功后移动方块</span>
      <span style="color:#569cd6">this</span><span style="color:#d4d4d4">.</span><span style="color:#dcdcaa">moveBlockRandomly</span><span style="color:#d4d4d4">(</span><span style="color:#d4d4d4">)</span><span style="color:#d4d4d4">;</span>
    <span style="color:#d4d4d4">}</span>
  <span style="color:#d4d4d4">}</span>

  <span style="color:#dcdcaa">isBlockClicked</span><span style="color:#d4d4d4">(</span><span style="color:#9cdcfe">x</span><span style="color:#d4d4d4">,</span> <span style="color:#9cdcfe">y</span><span style="color:#d4d4d4">)</span> <span style="color:#d4d4d4">{</span>
    <span style="color:#569cd6">return</span> <span style="color:#d4d4d4">(</span>
      <span style="color:#9cdcfe">x</span> <span style="color:#d4d4d4">&gt;</span><span style="color:#d4d4d4">=</span> <span style="color:#569cd6">this</span><span style="color:#d4d4d4">.</span><span style="color:#9cdcfe">blockX</span> <span style="color:#d4d4d4">&amp;</span><span style="color:#d4d4d4">&amp;</span>
      <span style="color:#9cdcfe">x</span> <span style="color:#d4d4d4">&lt;</span><span style="color:#d4d4d4">=</span> <span style="color:#569cd6">this</span><span style="color:#d4d4d4">.</span><span style="color:#9cdcfe">blockX</span> <span style="color:#d4d4d4">+</span> <span style="color:#569cd6">this</span><span style="color:#d4d4d4">.</span><span style="color:#9cdcfe">config</span><span style="color:#d4d4d4">.</span><span style="color:#9cdcfe">blockSize</span> <span style="color:#d4d4d4">&amp;</span><span style="color:#d4d4d4">&amp;</span>
      <span style="color:#9cdcfe">y</span> <span style="color:#d4d4d4">&gt;</span><span style="color:#d4d4d4">=</span> <span style="color:#569cd6">this</span><span style="color:#d4d4d4">.</span><span style="color:#9cdcfe">blockY</span> <span style="color:#d4d4d4">&amp;</span><span style="color:#d4d4d4">&amp;</span>
      <span style="color:#9cdcfe">y</span> <span style="color:#d4d4d4">&lt;</span><span style="color:#d4d4d4">=</span> <span style="color:#569cd6">this</span><span style="color:#d4d4d4">.</span><span style="color:#9cdcfe">blockY</span> <span style="color:#d4d4d4">+</span> <span style="color:#569cd6">this</span><span style="color:#d4d4d4">.</span><span style="color:#9cdcfe">config</span><span style="color:#d4d4d4">.</span><span style="color:#9cdcfe">blockSize</span>
    <span style="color:#d4d4d4">)</span><span style="color:#d4d4d4">;</span>
  <span style="color:#d4d4d4">}</span>

  <span style="color:#dcdcaa">moveBlockRandomly</span><span style="color:#d4d4d4">(</span><span style="color:#d4d4d4">)</span> <span style="color:#d4d4d4">{</span>
    <span style="color:#569cd6">this</span><span style="color:#d4d4d4">.</span><span style="color:#9cdcfe">blockX</span> <span style="color:#d4d4d4">=</span> <span style="color:#4ec9b0">Math</span><span style="color:#d4d4d4">.</span><span style="color:#dcdcaa">random</span><span style="color:#d4d4d4">(</span><span style="color:#d4d4d4">)</span> <span style="color:#d4d4d4">*</span> <span style="color:#d4d4d4">(</span><span style="color:#569cd6">this</span><span style="color:#d4d4d4">.</span><span style="color:#9cdcfe">canvas</span><span style="color:#d4d4d4">.</span><span style="color:#9cdcfe">width</span> <span style="color:#d4d4d4">-</span> <span style="color:#569cd6">this</span><span style="color:#d4d4d4">.</span><span style="color:#9cdcfe">config</span><span style="color:#d4d4d4">.</span><span style="color:#9cdcfe">blockSize</span><span style="color:#d4d4d4">)</span><span style="color:#d4d4d4">;</span>
    <span style="color:#569cd6">this</span><span style="color:#d4d4d4">.</span><span style="color:#9cdcfe">blockY</span> <span style="color:#d4d4d4">=</span> <span style="color:#b5cea8">100</span> <span style="color:#d4d4d4">+</span> <span style="color:#4ec9b0">Math</span><span style="color:#d4d4d4">.</span><span style="color:#dcdcaa">random</span><span style="color:#d4d4d4">(</span><span style="color:#d4d4d4">)</span> <span style="color:#d4d4d4">*</span> <span style="color:#d4d4d4">(</span><span style="color:#569cd6">this</span><span style="color:#d4d4d4">.</span><span style="color:#9cdcfe">canvas</span><span style="color:#d4d4d4">.</span><span style="color:#9cdcfe">height</span> <span style="color:#d4d4d4">-</span> <span style="color:#b5cea8">200</span><span style="color:#d4d4d4">)</span><span style="color:#d4d4d4">;</span>
  <span style="color:#d4d4d4">}</span>
<span style="color:#d4d4d4">}</span>

<span style="color:#6a9955">// 创建游戏实例</span>
<span style="color:#569cd6">const</span> <span style="color:#9cdcfe">game</span> <span style="color:#d4d4d4">=</span> <span style="color:#569cd6">new</span> <span style="color:#4ec9b0">ClickGame</span><span style="color:#d4d4d4">(</span><span style="color:#d4d4d4">)</span><span style="color:#d4d4d4">;</span>

<span style="color:#6a9955">// 监听触摸</span>
<span style="color:#9cdcfe">tt</span><span style="color:#d4d4d4">.</span><span style="color:#dcdcaa">onTouchStart</span><span style="color:#d4d4d4">(</span><span style="color:#d4d4d4">(</span><span style="color:#9cdcfe">e</span><span style="color:#d4d4d4">)</span> <span style="color:#d4d4d4">=</span><span style="color:#d4d4d4">&gt;</span> <span style="color:#d4d4d4">{</span>
  <span style="color:#569cd6">const</span> <span style="color:#9cdcfe">touch</span> <span style="color:#d4d4d4">=</span> <span style="color:#9cdcfe">e</span><span style="color:#d4d4d4">.</span><span style="color:#9cdcfe">touches</span><span style="color:#d4d4d4">[</span><span style="color:#b5cea8">0</span><span style="color:#d4d4d4">]</span><span style="color:#d4d4d4">;</span>
  <span style="color:#9cdcfe">game</span><span style="color:#d4d4d4">.</span><span style="color:#dcdcaa">handleClick</span><span style="color:#d4d4d4">(</span><span style="color:#9cdcfe">touch</span><span style="color:#d4d4d4">.</span><span style="color:#9cdcfe">clientX</span><span style="color:#d4d4d4">,</span> <span style="color:#9cdcfe">touch</span><span style="color:#d4d4d4">.</span><span style="color:#9cdcfe">clientY</span><span style="color:#d4d4d4">)</span><span style="color:#d4d4d4">;</span>
<span style="color:#d4d4d4">}</span><span style="color:#d4d4d4">)</span><span style="color:#d4d4d4">;</span></div>
<div class="a" style="left:3264px;top:286px;width:1px;height:1305px;background:#2e2e2e;"></div>
<div class="a" style="left:3265px;top:446px;width:27px;height:4px;background:#666666;"></div>
<div class="a" style="left:1376px;top:1591px;width:1916px;height:1px;background:#3a3a3a;"></div>
<div class="a" style="left:1376px;top:1592px;width:1916px;height:68px;background:#1c1c1c;"></div>
<div class="a" style="left:1417px;top:1611.6px;height:30.8px;line-height:30.8px;font-size:22px;color:#ffffff;font-weight:500;font-family:'Liberation Sans', sans-serif;">调试器</div>
<div class="a" style="left:1531px;top:1611.6px;height:30.8px;line-height:30.8px;font-size:22px;color:#9d9d9d;font-weight:500;font-family:'Liberation Sans', sans-serif;">抖音云</div>
<div class="a" style="left:1645px;top:1611.6px;height:30.8px;line-height:30.8px;font-size:22px;color:#9d9d9d;font-weight:500;font-family:'Liberation Sans', sans-serif;">搜索</div>
<div class="a" style="left:1736px;top:1611.6px;height:30.8px;line-height:30.8px;font-size:22px;color:#9d9d9d;font-weight:500;font-family:'Liberation Sans', sans-serif;">问题</div>
<div class="a" style="left:1800px;top:1609px;width:36px;height:36px;background:#4a4a4a;border-radius:50%;"></div>
<div class="a" style="left:1800.0px;width:36px;text-align:center;top:1611.6px;height:30.8px;line-height:30.8px;font-size:22px;color:#ffffff;font-weight:normal;font-family:'Liberation Sans', sans-serif;">8</div>
<div class="a" style="left:1880px;top:1611.6px;height:30.8px;line-height:30.8px;font-size:22px;color:#9d9d9d;font-weight:500;font-family:'Liberation Sans', sans-serif;">终端</div>
<div class="a" style="left:1972px;top:1611.6px;height:30.8px;line-height:30.8px;font-size:22px;color:#9d9d9d;font-weight:normal;font-family:'Liberation Sans', sans-serif;">AZURE</div>
<svg class="a" style="left:3180px;top:1612px;" width="28" height="24" viewBox="0 0 28 24"><path d="M4 17 L14 7 L24 17" stroke="#d0d0d0" stroke-width="2.2" fill="none" stroke-linecap="round" stroke-linejoin="round"/></svg>
<svg class="a" style="left:3232px;top:1612px;" width="28" height="28" viewBox="0 0 28 28"><path d="M5 5 L23 23 M23 5 L5 23" stroke="#d0d0d0" stroke-width="2.2" fill="none" stroke-linecap="round" stroke-linejoin="round"/></svg>
<div class="a" style="left:1376px;top:1660px;width:1916px;height:454px;background:#202124;"></div>
<div class="a" style="left:1376px;top:1660px;width:1916px;height:52px;background:#292a2d;"></div>
<div class="a" style="left:1376px;top:1664px;width:136px;height:48px;background:#000000;"></div>
<div class="a" style="left:1400px;top:1671.2px;height:33.6px;line-height:33.6px;font-size:24px;color:#ffffff;font-weight:normal;font-family:'Liberation Sans', sans-serif;">Console</div>
<div class="a" style="left:1535px;top:1671.2px;height:33.6px;line-height:33.6px;font-size:24px;color:#a8abb0;font-weight:normal;font-family:'Liberation Sans', sans-serif;">Sources</div>
<div class="a" style="left:1671px;top:1671.2px;height:33.6px;line-height:33.6px;font-size:24px;color:#a8abb0;font-weight:normal;font-family:'Liberation Sans', sans-serif;">Network</div>
<div class="a" style="left:1810px;top:1671.2px;height:33.6px;line-height:33.6px;font-size:24px;color:#a8abb0;font-weight:normal;font-family:'Liberation Sans', sans-serif;">Profiles</div>
<div class="a" style="left:1935px;top:1671.2px;height:33.6px;line-height:33.6px;font-size:24px;color:#a8abb0;font-weight:normal;font-family:'Liberation Sans', sans-serif;">Storage</div>
<div class="a" style="left:2067px;top:1671.2px;height:33.6px;line-height:33.6px;font-size:24px;color:#a8abb0;font-weight:normal;font-family:'Liberation Sans', sans-serif;">Mock</div>
<div class="a" style="left:2175px;top:1671.2px;height:33.6px;line-height:33.6px;font-size:24px;color:#a8abb0;font-weight:normal;font-family:'Liberation Sans', sans-serif;">Sensors</div>
<div class="a" style="left:3110px;top:1672px;width:2px;height:32px;background:#3c3c3c;"></div>
<svg class="a" style="left:3132px;top:1670px;" width="34" height="34" viewBox="0 0 34 34"><path d="M17 4 L28 10.5 V23.5 L17 30 L6 23.5 V10.5 Z" stroke="#9aa0a6" stroke-width="2" fill="none"/><circle cx="17" cy="17" r="4" stroke="#9aa0a6" stroke-width="2" fill="none"/></svg>
<div class="a" style="left:3202px;top:1673px;width:6px;height:6px;background:#9aa0a6;border-radius:50%;"></div>
<div class="a" style="left:3202px;top:1683px;width:6px;height:6px;background:#9aa0a6;border-radius:50%;"></div>
<div class="a" style="left:3202px;top:1693px;width:6px;height:6px;background:#9aa0a6;border-radius:50%;"></div>
<svg class="a" style="left:3244px;top:1670px;" width="34" height="34" viewBox="0 0 34 34"><rect x="3" y="12" width="20" height="19" rx="3" fill="#4a4a4a"/><rect x="12" y="3" width="20" height="20" rx="2" stroke="#9aa0a6" stroke-width="2.4" fill="#292a2d"/></svg>
<div class="a" style="left:1376px;top:1712px;width:1916px;height:2px;background:#3f4042;"></div>
<div class="a" style="left:1376px;top:1714px;width:1916px;height:52px;background:#292a2d;"></div>
<svg class="a" style="left:1390px;top:1724px;" width="34" height="32" viewBox="0 0 34 32"><rect x="3" y="4" width="28" height="24" stroke="#9aa0a6" stroke-width="2" fill="none"/><path d="M11 4 V28" stroke="#9aa0a6" stroke-width="2"/><path d="M16 9 L25 16 L16 23 Z" fill="#9aa0a6"/></svg>
<svg class="a" style="left:1450px;top:1724px;" width="32" height="32" viewBox="0 0 32 32"><circle cx="16" cy="16" r="11.5" stroke="#9aa0a6" stroke-width="3.2" fill="none"/><path d="M8 8 L24 24" stroke="#9aa0a6" stroke-width="3.2"/></svg>
<div class="a" style="left:1501px;top:1724px;width:2px;height:34px;background:#3c3c3c;"></div>
<div class="a" style="left:1520px;top:1724.2px;height:33.6px;line-height:33.6px;font-size:24px;color:#a8abb0;font-weight:normal;font-family:'Liberation Sans', sans-serif;">miniapp-service (bl...</div>
<svg class="a" style="left:1758px;top:1730px;" width="22" height="20" viewBox="0 0 22 20"><path d="M3 4 H19 L11 16 Z" fill="#9aa0a6"/></svg>
<div class="a" style="left:1794px;top:1724px;width:2px;height:34px;background:#3c3c3c;"></div>
<svg class="a" style="left:1814px;top:1726px;" width="36" height="30" viewBox="0 0 36 30"><path d="M2 15 Q18 0 34 15 Q18 30 2 15 Z" fill="#9aa0a6"/><circle cx="18" cy="15" r="6.5" fill="#292a2d"/><circle cx="18" cy="15" r="3.5" fill="#9aa0a6"/></svg>
<div class="a" style="left:1868px;top:1724px;width:2px;height:34px;background:#3c3c3c;"></div>
<div class="a" style="left:1883px;top:1719px;width:393px;height:42px;border:2px solid #4a4c50;background:#202124;box-sizing:border-box"></div>
<div class="a" style="left:1894px;top:1724.2px;height:33.6px;line-height:33.6px;font-size:24px;color:#a8abb0;font-weight:normal;font-family:'Liberation Sans', sans-serif;">Filter</div>
<div class="a" style="left:2293px;top:1724.2px;height:33.6px;line-height:33.6px;font-size:24px;color:#a8abb0;font-weight:normal;font-family:'Liberation Sans', sans-serif;">Default levels</div>
<svg class="a" style="left:2443px;top:1730px;" width="22" height="20" viewBox="0 0 22 20"><path d="M3 4 H19 L11 16 Z" fill="#9aa0a6"/></svg>
<div class="a" style="left:2480px;top:1724px;width:2px;height:34px;background:#3c3c3c;"></div>
<div class="a" style="left:3109px;top:1724px;width:2px;height:34px;background:#3c3c3c;"></div>
<div class="a" style="left:3128px;top:1724.2px;height:33.6px;line-height:33.6px;font-size:24px;color:#8a8d91;font-weight:normal;font-family:'Liberation Sans', sans-serif;">2 hidden</div>
<svg class="a" style="left:3248px;top:1722px;" width="34" height="34" viewBox="0 0 34 34"><path d="M17 4 L28 10.5 V23.5 L17 30 L6 23.5 V10.5 Z" stroke="#9aa0a6" stroke-width="2" fill="none"/><circle cx="17" cy="17" r="4" stroke="#9aa0a6" stroke-width="2" fill="none"/></svg>
<div class="a" style="left:1376px;top:1766px;width:1916px;height:2px;background:#3f4042;"></div>
<div class="a" style="left:1427px;top:1770px;height:36px;line-height:36px;font-size:22px;font-family:'Liberation Mono', monospace;color:#d5d5d5;white-space:pre">[TMG] use engine:  helium</div>
<div class="a" style="left:3063px;top:1770px;height:36px;line-height:36px;font-size:22px;font-family:'Liberation Mono', monospace;color:#c8c8c8;text-decoration:underline">tmg-core.js:2</div>
<div class="a" style="left:1376px;top:1804px;width:1916px;height:2px;background:#34363a;"></div>
<svg class="a" style="left:1390px;top:1814px;" width="20" height="24" viewBox="0 0 20 24"><path d="M5 4 L14 12 L5 20" stroke="#4c8df6" stroke-width="3" fill="none" stroke-linejoin="round"/></svg>
<div class="a" style="left:1393px;top:1603px;width:104px;height:52px;border:6.5px solid #f24b4b;border-radius:13px;box-sizing:border-box"></div>
<div class="a" style="left:1366px;top:1656px;width:1376px;height:254px;border:8px solid #f24b4b;border-radius:15px;box-sizing:border-box"></div>
<div class="a" style="left:800px;top:2114px;width:2491px;height:43px;background:#222222;border-radius:0 0 19px 0;"></div>
<svg class="a" style="left:830px;top:2122px;" width="30" height="30" viewBox="0 0 30 30"><path d="M8 22 L4 18 Q10 8 26 4 Q24 18 12 26 Z M14 16 A2 2 0 1 0 14.1 16 M5 24 V28 H9" stroke="#a9a9a9" stroke-width="1.8" fill="none" stroke-linecap="round" stroke-linejoin="round"/></svg>
<svg class="a" style="left:858px;top:2122px;" width="30" height="30" viewBox="0 0 30 30"><path d="M3 27 L9 21 M16 10 L22 4 M24 12 L28 8 M10 16 L16 22 M11 12 L20 21 L16 25 Q12 25 9 22 L8 21 Q5 18 7 15 Z" stroke="#a9a9a9" stroke-width="1.8" fill="none" stroke-linecap="round" stroke-linejoin="round"/></svg>
<div class="a" style="left:893px;top:2118.5px;height:35.0px;line-height:35.0px;font-size:25px;color:#a9a9a9;font-weight:normal;font-family:'Liberation Sans', sans-serif;">Launchpad</div>
<svg class="a" style="left:1050px;top:2122px;" width="28" height="28" viewBox="0 0 28 28"><circle cx="14" cy="14" r="11" stroke="#a9a9a9" stroke-width="2" fill="none"/><path d="M10 10 L18 18 M18 10 L10 18" stroke="#a9a9a9" stroke-width="2" fill="none" stroke-linecap="round" stroke-linejoin="round"/></svg>
<div class="a" style="left:1085px;top:2118.5px;height:35.0px;line-height:35.0px;font-size:25px;color:#a9a9a9;font-weight:normal;font-family:'Liberation Sans', sans-serif;">0</div>
<svg class="a" style="left:1106px;top:2120px;" width="30" height="30" viewBox="0 0 30 30"><path d="M15 4 L27 26 H3 Z M15 12 V19 M15 22 V23" stroke="#a9a9a9" stroke-width="2" fill="none" stroke-linecap="round" stroke-linejoin="round"/></svg>
<div class="a" style="left:1143px;top:2118.5px;height:35.0px;line-height:35.0px;font-size:25px;color:#a9a9a9;font-weight:normal;font-family:'Liberation Sans', sans-serif;">1</div>
<svg class="a" style="left:1163px;top:2122px;" width="28" height="28" viewBox="0 0 28 28"><circle cx="14" cy="14" r="11" stroke="#a9a9a9" stroke-width="2" fill="none"/><path d="M14 12 V20 M14 8 V9" stroke="#a9a9a9" stroke-width="2.2" fill="none" stroke-linecap="round" stroke-linejoin="round"/></svg>
<div class="a" style="left:1198px;top:2118.5px;height:35.0px;line-height:35.0px;font-size:25px;color:#a9a9a9;font-weight:normal;font-family:'Liberation Sans', sans-serif;">7</div>
<svg class="a" style="left:1246px;top:2122px;" width="28" height="28" viewBox="0 0 28 28"><circle cx="14" cy="14" r="11" stroke="#a9a9a9" stroke-width="1.8" fill="none"/><ellipse cx="14" cy="14" rx="5" ry="11" stroke="#a9a9a9" stroke-width="1.8" fill="none"/><path d="M3 14 H25 M5 8 H23 M5 20 H23" stroke="#a9a9a9" stroke-width="1.6"/></svg>
<div class="a" style="left:1280px;top:2118.5px;height:35.0px;line-height:35.0px;font-size:25px;color:#a9a9a9;font-weight:normal;font-family:'Liberation Sans', sans-serif;">English</div>
<div class="a" style="left:2035px;top:2119.2px;height:33.6px;line-height:33.6px;font-size:24px;color:#a9a9a9;font-weight:normal;font-family:'Liberation Sans', sans-serif;">行 16，列 34</div>
<div class="a" style="left:2213px;top:2119.2px;height:33.6px;line-height:33.6px;font-size:24px;color:#a9a9a9;font-weight:normal;font-family:'Liberation Sans', sans-serif;">空格: 2</div>
<div class="a" style="left:2323px;top:2119.2px;height:33.6px;line-height:33.6px;font-size:24px;color:#a9a9a9;font-weight:normal;font-family:'Liberation Sans', sans-serif;">UTF-8</div>
<div class="a" style="left:2428px;top:2119.2px;height:33.6px;line-height:33.6px;font-size:24px;color:#a9a9a9;font-weight:normal;font-family:'Liberation Sans', sans-serif;">LF</div>
<div class="a" style="left:2484px;top:2120.6px;height:30.8px;line-height:30.8px;font-size:22px;color:#a9a9a9;font-weight:normal;font-family:'Liberation Sans', sans-serif;">{ }</div>
<div class="a" style="left:2523px;top:2118.8px;height:34.3px;line-height:34.3px;font-size:24.5px;color:#a9a9a9;font-weight:normal;font-family:'Liberation Sans', sans-serif;">JavaScript</div>
<div class="a" style="left:2670px;top:2118.8px;height:34.3px;line-height:34.3px;font-size:24.5px;color:#a9a9a9;font-weight:normal;font-family:'Liberation Sans', sans-serif;">AppWorks</div>
<svg class="a" style="left:2815px;top:2123px;" width="30" height="28" viewBox="0 0 30 28"><path d="M6 8 A11 11 0 1 1 4 14 M3 5 V10 H8 M15 8 V14 L19 17" stroke="#a9a9a9" stroke-width="2" fill="none" stroke-linecap="round" stroke-linejoin="round"/></svg>
<div class="a" style="left:2851px;top:2118.8px;height:34.3px;line-height:34.3px;font-size:24.5px;color:#a9a9a9;font-weight:normal;font-family:'Liberation Sans', sans-serif;">53 min</div>
<svg class="a" style="left:2961px;top:2124px;" width="26" height="24" viewBox="0 0 26 24"><path d="M3 13 L9 20 L23 4" stroke="#a9a9a9" stroke-width="2" fill="none" stroke-linecap="round" stroke-linejoin="round"/></svg>
<div class="a" style="left:2995px;top:2118.8px;height:34.3px;line-height:34.3px;font-size:24.5px;color:#a9a9a9;font-weight:normal;font-family:'Liberation Sans', sans-serif;">Spell</div>
<svg class="a" style="left:3083px;top:2124px;" width="26" height="24" viewBox="0 0 26 24"><path d="M3 13 L9 20 L23 4" stroke="#a9a9a9" stroke-width="2" fill="none" stroke-linecap="round" stroke-linejoin="round"/></svg>
<div class="a" style="left:3118px;top:2118.8px;height:34.3px;line-height:34.3px;font-size:24.5px;color:#a9a9a9;font-weight:normal;font-family:'Liberation Sans', sans-serif;">Prettier</div>
<svg class="a" style="left:3236px;top:2122px;" width="28" height="30" viewBox="0 0 28 30"><path d="M7 21 V13 A7 7 0 0 1 21 13 V21 L23 23 H5 Z M12 26 H16" stroke="#a9a9a9" stroke-width="2" fill="none" stroke-linecap="round" stroke-linejoin="round"/></svg>
</body></html>
